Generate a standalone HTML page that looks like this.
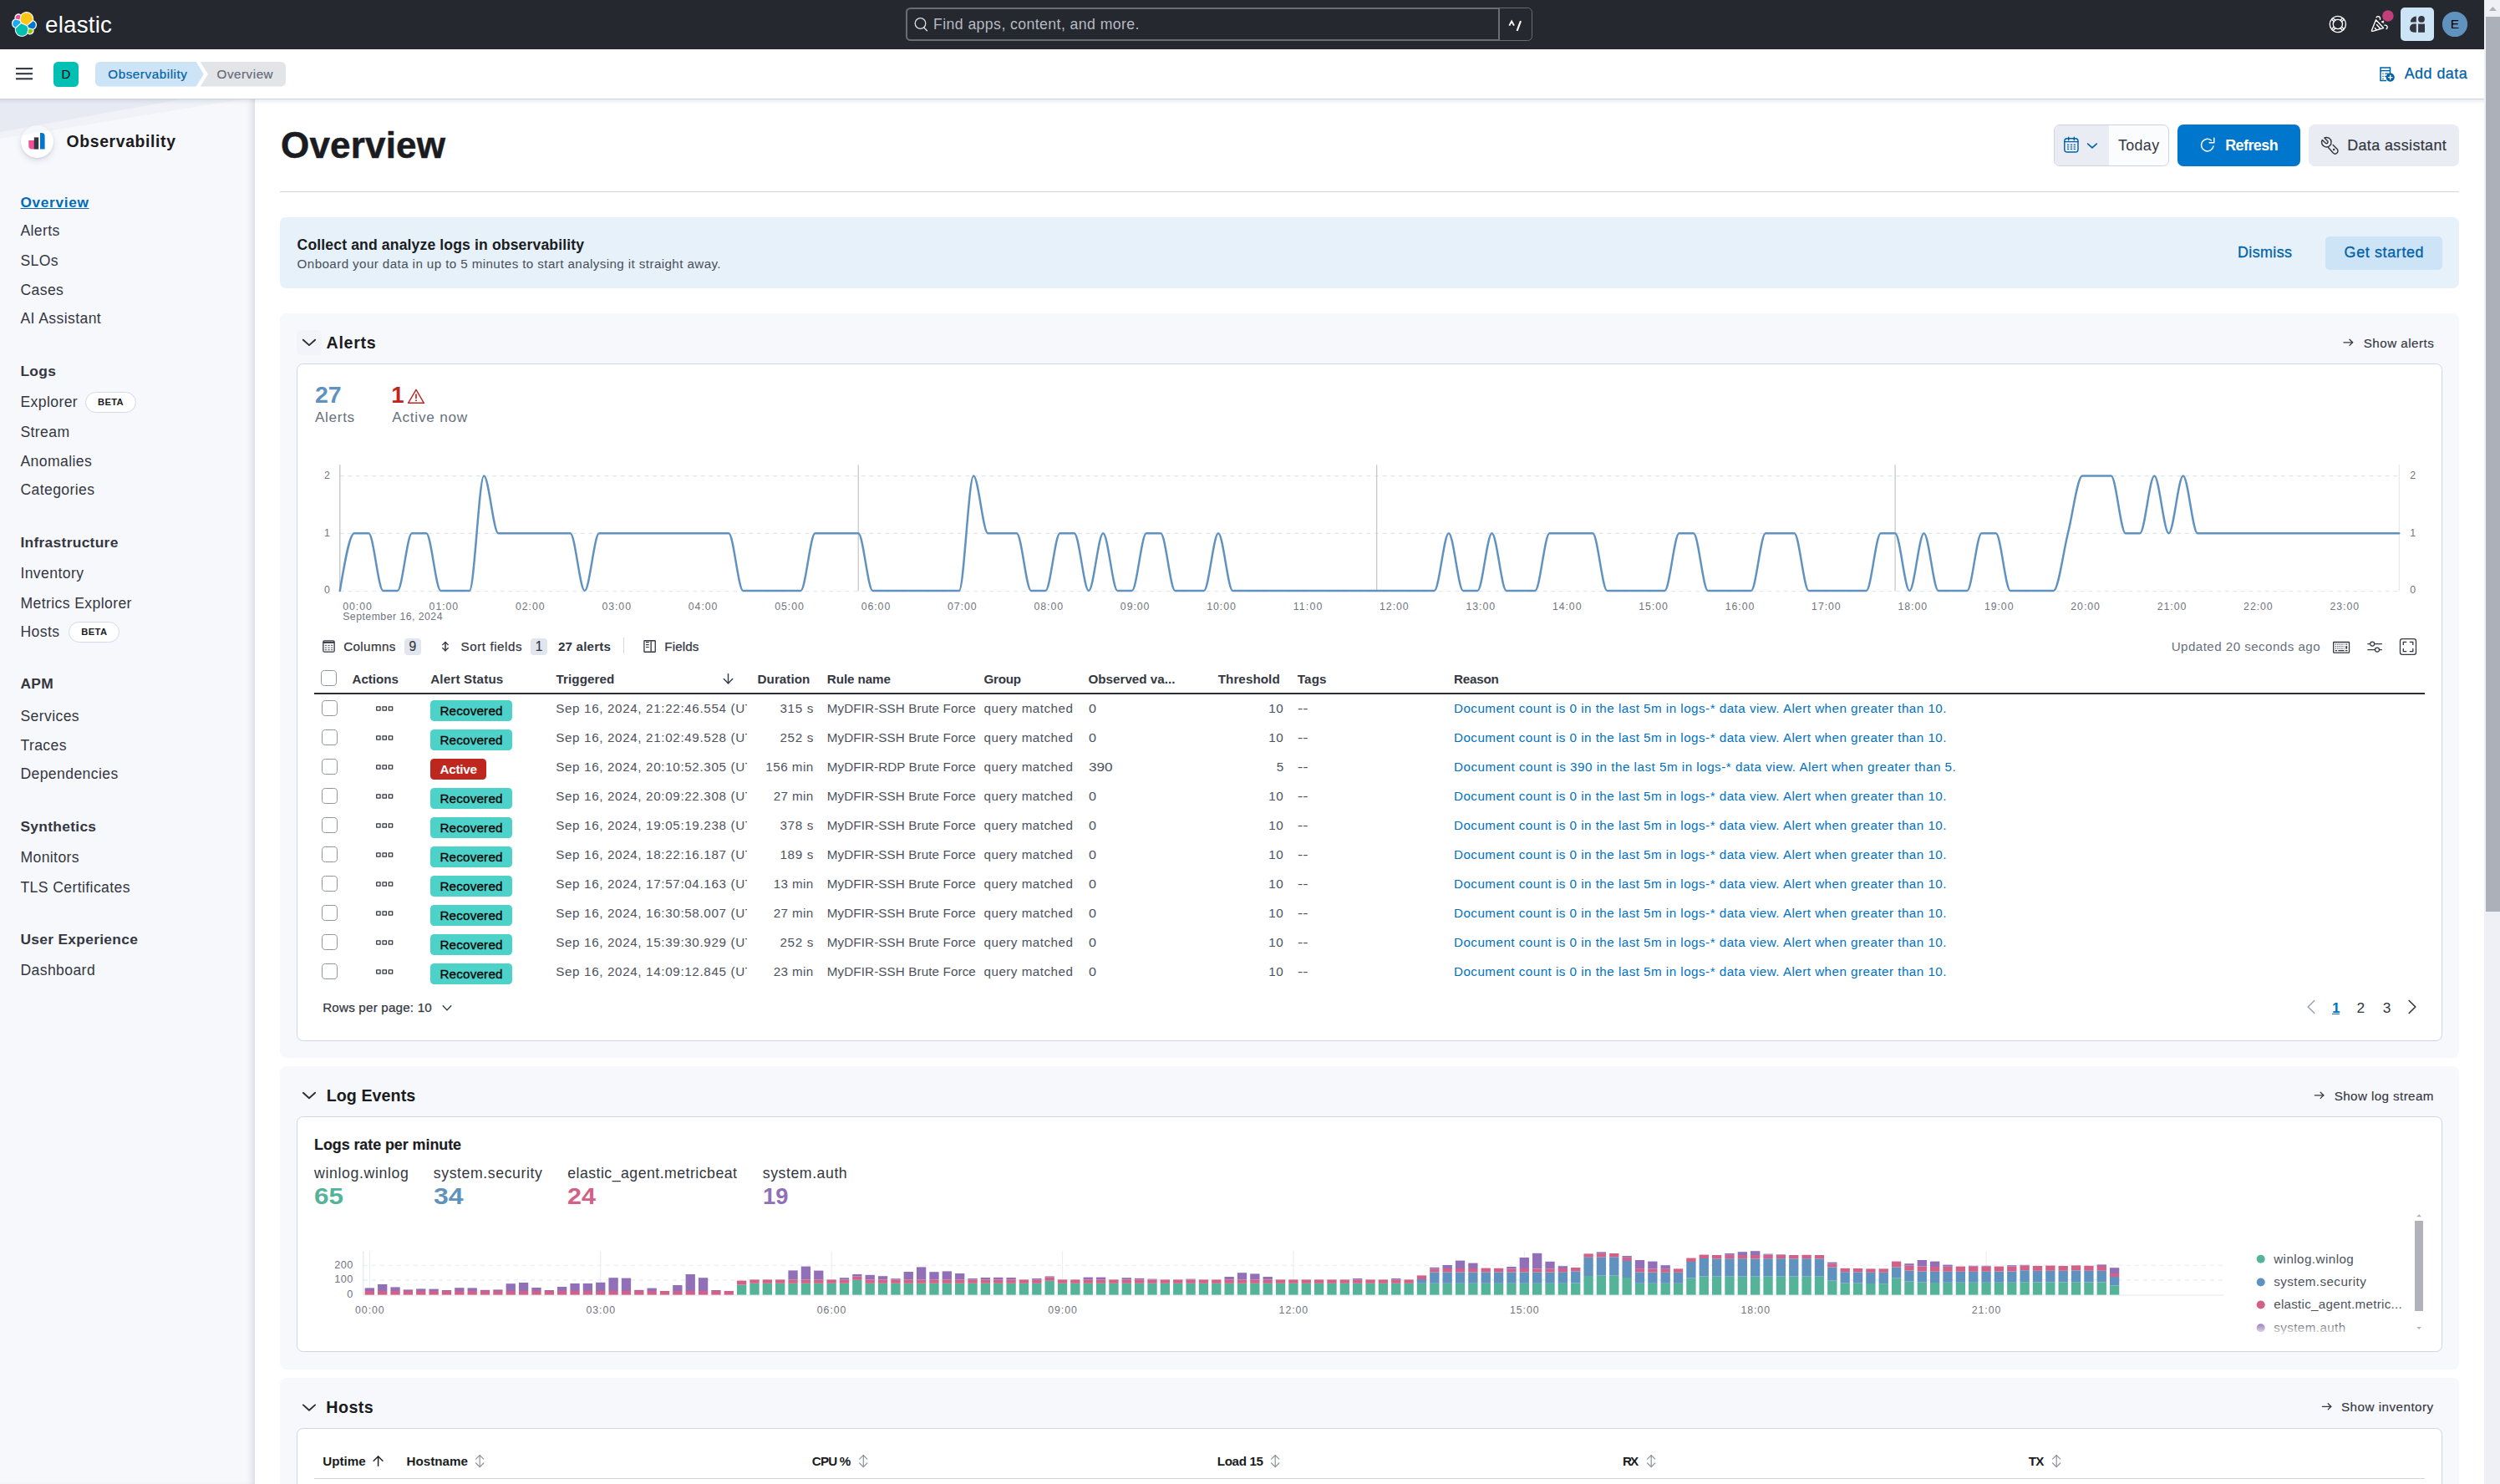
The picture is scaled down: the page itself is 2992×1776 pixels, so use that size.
<!DOCTYPE html><html><head><meta charset="utf-8"><title>Overview - Observability - Elastic</title><style>
html,body{margin:0;padding:0;}body{width:2992px;height:1776px;overflow:hidden;background:#fff;position:relative;font-family:"Liberation Sans", sans-serif;}
.b{position:absolute;}.t{position:absolute;white-space:nowrap;line-height:1;}
svg.l{position:absolute;left:0;top:0;width:2992px;height:1776px;overflow:visible;}
</style></head><body>
<div class="b" style="left:2973.0px;top:0.0px;width:19.0px;height:1776.0px;background:#eff0f5;"></div>
<div class="b" style="left:2975.0px;top:20.0px;width:17.0px;height:1071.0px;background:#acb0b9;"></div>
<div class="b" style="left:0.0px;top:0.0px;width:2973.0px;height:58.7px;background:#25282f;"></div>
<div class="b" style="left:1084.0px;top:9.0px;width:710.5px;height:40.0px;border:2px solid #6a6d75;box-sizing:border-box;border-radius:5.5px 0 0 5.5px;"></div>
<div class="b" style="left:1793.0px;top:9.0px;width:41.2px;height:40.0px;border:1.2px solid #6a6d75;box-sizing:border-box;border-radius:0 5.5px 5.5px 0;"></div>
<div class="b" style="left:2873.0px;top:9.0px;width:40.0px;height:40.0px;background:#cce4f5;border-radius:5px;"></div>
<div class="b" style="left:0.0px;top:58.7px;width:2973.0px;height:59.3px;background:#fff;"></div>
<div class="b" style="left:0.0px;top:118.0px;width:2973.0px;height:1.0px;background:#ccd2de;"></div>
<div class="b" style="left:0.0px;top:119.0px;width:2973.0px;height:6.0px;background:linear-gradient(rgba(105,120,150,0.13),rgba(105,120,150,0));z-index:3;"></div>
<div class="b" style="left:64.0px;top:74.0px;width:30.0px;height:30.0px;background:#00bfb3;border-radius:5.5px;"></div>
<div class="b" style="left:0.0px;top:119.0px;width:305.0px;height:1657.0px;background:#f7f8fc;box-shadow:inset -8px 0 8px -6px rgba(90,105,140,0.25);"></div>
<div class="b" style="left:24.5px;top:149.7px;width:39.0px;height:39.0px;background:#fff;border-radius:20px;box-shadow:0 3px 7px rgba(60,70,100,0.16),0 1px 2px rgba(60,70,100,0.10);"></div>
<div class="b" style="left:102.0px;top:469.0px;width:60.7px;height:25.0px;background:#fff;border-radius:12.5px;border:1px solid #d3dae6;box-sizing:border-box;"></div>
<div class="b" style="left:82.3px;top:744.0px;width:60.7px;height:25.0px;background:#fff;border-radius:12.5px;border:1px solid #d3dae6;box-sizing:border-box;"></div>
<div class="b" style="left:335.0px;top:229.0px;width:2608.0px;height:1.0px;background:#cfd6e3;"></div>
<div class="b" style="left:2458.3px;top:149.1px;width:137.3px;height:49.5px;background:#fbfcfd;border-radius:7px;border:1px solid #cdd3e0;box-sizing:border-box;"></div>
<div class="b" style="left:2459.3px;top:150.1px;width:64.5px;height:47.5px;background:#e9edf3;border-radius:6px 0 0 6px;"></div>
<div class="b" style="left:2606.0px;top:149.1px;width:147.0px;height:49.5px;background:#0077cc;border-radius:7px;"></div>
<div class="b" style="left:2763.0px;top:149.1px;width:180.0px;height:49.5px;background:#e9edf3;border-radius:7px;"></div>
<div class="b" style="left:335.0px;top:260.0px;width:2608.0px;height:85.0px;background:#e6f1fa;border-radius:7.5px;"></div>
<div class="b" style="left:2783.0px;top:283.0px;width:140.0px;height:40.0px;background:#cce4f5;border-radius:5px;"></div>
<div class="b" style="left:335.0px;top:375.0px;width:2608.0px;height:891.0px;background:#f7f8fc;border-radius:7.5px;"></div>
<div class="b" style="left:355.0px;top:395.0px;width:30.0px;height:30.0px;background:#f3f4f9;border-radius:5px;"></div>
<div class="b" style="left:355.0px;top:435.0px;width:2568.0px;height:811.0px;background:#fff;border-radius:7.5px;border:1px solid #ced5e3;box-sizing:border-box;"></div>
<div class="b" style="left:484.0px;top:764.1px;width:19.7px;height:19.6px;background:#e0e5ee;border-radius:4px;"></div>
<div class="b" style="left:635.2px;top:764.1px;width:19.8px;height:19.6px;background:#e0e5ee;border-radius:4px;"></div>
<div class="b" style="left:746.0px;top:763.0px;width:1.0px;height:19.0px;background:#d3dae6;"></div>
<div class="b" style="left:384.1px;top:801.9px;width:18.8px;height:18.8px;background:#fff;border-radius:4.6px;border:1.25px solid #8f949e;box-sizing:border-box;"></div>
<div class="b" style="left:375.8px;top:828.9px;width:2526.3px;height:1.8px;background:#2b2e37;"></div>
<div class="b" style="left:385.0px;top:838.4px;width:18.8px;height:18.8px;background:#fff;border-radius:4.6px;border:1.25px solid #8f949e;box-sizing:border-box;"></div>
<div class="b" style="left:515.1px;top:838.0px;width:97.8px;height:24.9px;background:#4dd2ca;border-radius:4.5px;"></div>
<div class="b" style="left:385.0px;top:873.4px;width:18.8px;height:18.8px;background:#fff;border-radius:4.6px;border:1.25px solid #8f949e;box-sizing:border-box;"></div>
<div class="b" style="left:515.1px;top:873.0px;width:97.8px;height:24.9px;background:#4dd2ca;border-radius:4.5px;"></div>
<div class="b" style="left:385.0px;top:908.4px;width:18.8px;height:18.8px;background:#fff;border-radius:4.6px;border:1.25px solid #8f949e;box-sizing:border-box;"></div>
<div class="b" style="left:515.1px;top:908.0px;width:67.0px;height:24.9px;background:#bd271e;border-radius:4.5px;"></div>
<div class="b" style="left:385.0px;top:943.4px;width:18.8px;height:18.8px;background:#fff;border-radius:4.6px;border:1.25px solid #8f949e;box-sizing:border-box;"></div>
<div class="b" style="left:515.1px;top:943.0px;width:97.8px;height:24.9px;background:#4dd2ca;border-radius:4.5px;"></div>
<div class="b" style="left:385.0px;top:978.4px;width:18.8px;height:18.8px;background:#fff;border-radius:4.6px;border:1.25px solid #8f949e;box-sizing:border-box;"></div>
<div class="b" style="left:515.1px;top:978.0px;width:97.8px;height:24.9px;background:#4dd2ca;border-radius:4.5px;"></div>
<div class="b" style="left:385.0px;top:1013.4px;width:18.8px;height:18.8px;background:#fff;border-radius:4.6px;border:1.25px solid #8f949e;box-sizing:border-box;"></div>
<div class="b" style="left:515.1px;top:1013.0px;width:97.8px;height:24.9px;background:#4dd2ca;border-radius:4.5px;"></div>
<div class="b" style="left:385.0px;top:1048.4px;width:18.8px;height:18.8px;background:#fff;border-radius:4.6px;border:1.25px solid #8f949e;box-sizing:border-box;"></div>
<div class="b" style="left:515.1px;top:1048.0px;width:97.8px;height:24.9px;background:#4dd2ca;border-radius:4.5px;"></div>
<div class="b" style="left:385.0px;top:1083.4px;width:18.8px;height:18.8px;background:#fff;border-radius:4.6px;border:1.25px solid #8f949e;box-sizing:border-box;"></div>
<div class="b" style="left:515.1px;top:1083.0px;width:97.8px;height:24.9px;background:#4dd2ca;border-radius:4.5px;"></div>
<div class="b" style="left:385.0px;top:1118.4px;width:18.8px;height:18.8px;background:#fff;border-radius:4.6px;border:1.25px solid #8f949e;box-sizing:border-box;"></div>
<div class="b" style="left:515.1px;top:1118.0px;width:97.8px;height:24.9px;background:#4dd2ca;border-radius:4.5px;"></div>
<div class="b" style="left:385.0px;top:1153.4px;width:18.8px;height:18.8px;background:#fff;border-radius:4.6px;border:1.25px solid #8f949e;box-sizing:border-box;"></div>
<div class="b" style="left:515.1px;top:1153.0px;width:97.8px;height:24.9px;background:#4dd2ca;border-radius:4.5px;"></div>
<div class="b" style="left:2791.4px;top:1212.8px;width:8.6px;height:1.3px;background:#0071c2;"></div>
<div class="b" style="left:335.0px;top:1276.0px;width:2608.0px;height:363.0px;background:#f7f8fc;border-radius:7.5px;"></div>
<div class="b" style="left:355.0px;top:1336.0px;width:2568.0px;height:282.0px;background:#fff;border-radius:7.5px;border:1px solid #ced5e3;box-sizing:border-box;"></div>
<div class="b" style="left:2695.0px;top:1582.0px;width:190.0px;height:17.0px;background:linear-gradient(rgba(255,255,255,0),rgba(255,255,255,0.95));z-index:4;"></div>
<div class="b" style="left:2890.1px;top:1460.8px;width:10.0px;height:108.2px;background:#b1b2b9;"></div>
<div class="b" style="left:335.0px;top:1649.0px;width:2608.0px;height:140.0px;background:#f7f8fc;border-radius:7.5px 7.5px 0 0;"></div>
<div class="b" style="left:355.0px;top:1709.0px;width:2568.0px;height:90.0px;background:#fff;border-radius:7.5px;border:1px solid #ced5e3;box-sizing:border-box;"></div>
<div class="b" style="left:376.0px;top:1769.0px;width:2526.0px;height:1.0px;background:#cfd6e3;"></div>
<svg class="l" viewBox="0 0 2992 1776">
<polygon points="2978.9,13 2983.4,8 2987.9,13" fill="#adb0b8"/>
<g transform="translate(14,14) scale(0.9375)"><path fill="#FFF" d="M32 16.77a6.334 6.334 0 00-1.14-3.63 6.269 6.269 0 00-3.02-2.28 8.944 8.944 0 00.16-1.7A9.127 9.127 0 0026.25 3.8a9.017 9.017 0 00-4.5-3.33A8.919 8.919 0 0016.17.43a8.98 8.98 0 00-4.58 3.2 4.896 4.896 0 00-5.56-.34 4.955 4.955 0 00-2.1 2.5 5.022 5.022 0 00-.05 3.28A6.392 6.392 0 00.03 15.2a6.33 6.33 0 001.15 3.65 6.265 6.265 0 003.04 2.28 8.73 8.73 0 00-.17 1.7 9.101 9.101 0 001.75 5.34 8.99 8.99 0 004.5 3.32 8.9 8.9 0 005.57.03 8.963 8.963 0 004.57-3.2 4.895 4.895 0 005.55.33 4.955 4.955 0 002.1-2.5 5.022 5.022 0 00.04-3.28 6.397 6.397 0 002.84-2.3A6.333 6.333 0 0032 16.77"/><path fill="#FEC514" d="M12.58 13.79l7 3.19 7.07-6.19a7.834 7.834 0 00.15-1.57 7.947 7.947 0 00-1.54-4.69 7.851 7.851 0 00-3.96-2.88 7.785 7.785 0 00-4.88.01 7.846 7.846 0 00-3.95 2.9l-1.17 6.1 1.28 3.13z"/><path fill="#00BFB3" d="M5.33 21.22a7.958 7.958 0 001.4 6.29 7.86 7.86 0 003.97 2.91 7.8 7.8 0 004.9-.02 7.855 7.855 0 003.95-2.94l1.17-6.08-1.56-2.97-7.03-3.2-6.8 6.01z"/><path fill="#F04E98" d="M5.29 9.1l4.8 1.14 1.05-5.45a3.78 3.78 0 00-4.32-.14 3.826 3.826 0 00-1.53 4.45"/><path fill="#1BA9F5" d="M4.87 10.25a5.31 5.31 0 00-2.52 1.89 5.259 5.259 0 00-.14 6.01 5.3 5.3 0 002.42 2.02l6.73-6.09-1.23-2.64-5.26-1.19z"/><path fill="#93C90E" d="M20.87 27.21a3.773 3.773 0 004.31.13 3.82 3.82 0 001.53-4.44l-4.8-1.12-1.04 5.43z"/><path fill="#07C" d="M21.85 20.63l5.28 1.24a5.337 5.337 0 002.52-1.9 5.285 5.285 0 00.98-3.03 5.28 5.28 0 00-.93-2.98 5.32 5.32 0 00-2.43-2.02l-6.9 6.05 1.48 2.64z"/></g>
<circle cx="1101.5" cy="28" r="6.3" fill="none" stroke="#dfe1e6" stroke-width="1.3"/>
<line x1="1105.80" y1="33.00" x2="1109.50" y2="36.80" stroke="#dfe1e6" stroke-width="1.3" stroke-linecap="round"/>
<path d="M1806.3 30.6 L1809.15 25.5 L1812.0 30.6" fill="none" stroke="#fff" stroke-width="1.9" stroke-linejoin="miter"/>
<path d="M1815.6 36.8 L1820.0 25.2" fill="none" stroke="#fff" stroke-width="2.1"/>
<g fill="none" stroke="#fff" stroke-width="1.35"><circle cx="2797.9" cy="29" r="9.6"/><circle cx="2797.9" cy="29" r="5.6"/><path d="M2790.4 23.0l3.2 3.2 M2792.0 21.4l3.2 3.2 M2805.4 23.0l-3.2 3.2 M2803.8 21.4l-3.2 3.2 M2790.4 35.0l3.2-3.2 M2792.0 36.6l3.2-3.2 M2805.4 35.0l-3.2-3.2 M2803.8 36.6l-3.2-3.2"/></g>
<g fill="none" stroke="#fff" stroke-width="1.4" stroke-linejoin="round" stroke-linecap="round"><path d="M2843.5 23.7 L2852.6 33.5 L2839.6 37.3 Q2838.0 37.7 2838.6 36.1 Z"/><path d="M2844.5 29.6 L2848.3 33.7 M2842.3 33.6 L2844.0 35.4"/><path d="M2844.1 20.8 A2.4 2.4 0 0 1 2848.5 21.7 V23.3"/><path d="M2852.7 25.2 L2850.5 26.1 L2852.7 27.1" stroke-width="1.2"/><path d="M2853.8 30.1 h1.4 a2.5 2.5 0 0 1 0.9 4.5"/></g>
<circle cx="2857.9" cy="19" r="6.8" fill="#c2407a"/>
<g fill="#343741"><path d="M2891.8 19.5 A6.9 6.9 0 0 0 2884.9 26.4 L2891.8 26.4 Z"/><circle cx="2898" cy="22.9" r="3.9"/><path d="M2891.8 28.6 L2889.0 28.6 A5.1 5.1 0 0 0 2889.0 38.8 L2891.8 38.8 Z"/><rect x="2894.1" y="28.6" width="7.9" height="10.2"/></g>
<circle cx="2938" cy="29" r="15.1" fill="#6092c0"/>
<line x1="19.00" y1="82.10" x2="39.00" y2="82.10" stroke="#343741" stroke-width="2.1" />
<line x1="19.00" y1="88.20" x2="39.00" y2="88.20" stroke="#343741" stroke-width="2.1" />
<line x1="19.00" y1="94.30" x2="39.00" y2="94.30" stroke="#343741" stroke-width="2.1" />
<path d="M119.5 74 H234.7 L243.8 88.7 L234.7 103.4 H119.5 A5.5 5.5 0 0 1 114 97.9 V79.5 A5.5 5.5 0 0 1 119.5 74 Z" fill="#cce4f5"/>
<path d="M239.8 74 H336.5 A5.5 5.5 0 0 1 342 79.5 V97.9 A5.5 5.5 0 0 1 336.5 103.4 H239.8 L248.9 88.7 Z" fill="#e3e4e8"/>
<g fill="none" stroke="#0061a6" stroke-width="1.5"><path d="M2860.5 88 V81 H2849 V96.4 H2856"/><path d="M2849 84.6 H2860.5" /><path d="M2851.3 88.2 h1.4 M2854.3 88.2 h4.2 M2851.3 91.3 h1.4 M2854.3 91.3 h2.4 M2851.3 94.3 h1.4" stroke-width="1.3"/></g>
<circle cx="2860.7" cy="92.6" r="5.1" fill="#0061a6"/>
<path d="M2860.7 89.8 v5.6 M2857.9 92.6 h5.6" stroke="#fff" stroke-width="1.4" fill="none"/>
<polygon points="0,119 290,119 0,166" fill="#e4e7f0" opacity="0.32"/>
<polygon points="0,119 216,119 0,158" fill="#dde1ec" opacity="0.42"/>
<path d="M34.3 168.1 H41.2 V178.6 H38.3 A4 4 0 0 1 34.3 174.6 Z" fill="#f04e98"/>
<rect x="40.8" y="164.4" width="5.4" height="14.2" fill="#343741"/>
<path d="M48 159 H49.6 A4 4 0 0 1 53.6 163 V178.6 H48 Z" fill="#0077cc"/>
<g fill="none" stroke="#0061a6" stroke-width="1.45" stroke-linejoin="round"><rect x="2470.8" y="165.8" width="16.2" height="16.2" rx="3.3"/><path d="M2470.8 169.6 H2487 M2475.7 164.3 v3.4 M2482.3 164.3 v3.4" stroke-linecap="round"/><path d="M2474 173.3 h2.2 M2477.9 173.3 h2.2 M2481.7 173.3 h2.2 M2474 175.9 h2.2 M2477.9 175.9 h2.2 M2481.7 175.9 h2.2 M2474 178.4 h2.2 M2477.9 178.4 h2.2 M2481.7 178.4 h2.2" stroke-width="1.15"/></g>
<polyline points="2498.65,172.10 2503.95,176.80 2509.25,172.10" fill="none" stroke="#0061a6" stroke-width="1.6" stroke-linecap="round" stroke-linejoin="round"/>
<g fill="none" stroke="#fff" stroke-width="1.5" stroke-linecap="round" stroke-linejoin="round"><path d="M2649.0 174.9 A7.3 7.3 0 1 1 2646.3 167.9"/><path d="M2649.8 165.2 v5.6 h-5.6"/></g>
<g fill="none" stroke="#343741" stroke-width="1.45" stroke-linejoin="round" stroke-linecap="round"><path d="M2781.9 165.0 L2785.8 168.9 A1.75 1.75 0 0 1 2783.5 171.4 L2779.3 167.4 A5.75 5.75 0 1 0 2781.9 165.0"/><path d="M2786.5 176.4 L2792.3 183.0 A3.3 3.3 0 0 0 2797.0 178.3 L2792.2 173.4"/><circle cx="2793.2" cy="179.0" r="0.55" fill="#343741"/></g>
<polyline points="362.85,406.70 370.00,413.10 377.15,406.70" fill="none" stroke="#2a2d36" stroke-width="1.9" stroke-linecap="round" stroke-linejoin="round"/>
<line x1="2805.00" y1="409.80" x2="2815.60" y2="409.80" stroke="#343741" stroke-width="1.3" stroke-linecap="round"/>
<polyline points="2812.00,406.20 2815.60,409.80 2812.00,413.40" fill="none" stroke="#343741" stroke-width="1.3" stroke-linecap="round" stroke-linejoin="round"/>
<g fill="none" stroke="#bd271e" stroke-width="1.4" stroke-linejoin="round"><path d="M498 466.3 L507.4 482.3 H488.6 Z"/></g>
<path d="M498 471.5 v5.4" stroke="#bd271e" stroke-width="1.7" fill="none"/><circle cx="498" cy="479.3" r="1" fill="#bd271e"/>
<line x1="406.80" y1="569.60" x2="2871.30" y2="569.60" stroke="#e1e5ef" stroke-width="1.2" stroke-dasharray="4.8 4.8"/>
<line x1="406.80" y1="638.30" x2="2871.30" y2="638.30" stroke="#e1e5ef" stroke-width="1.2" stroke-dasharray="4.8 4.8"/>
<line x1="406.80" y1="707.60" x2="2871.30" y2="707.60" stroke="#e4e8f1" stroke-width="1.2" stroke-dasharray="4.8 4.8"/>
<line x1="406.80" y1="556.20" x2="406.80" y2="707.40" stroke="#bcbdc2" stroke-width="1.2" />
<line x1="1027.23" y1="556.20" x2="1027.23" y2="707.40" stroke="#c3c4c8" stroke-width="1.2" />
<line x1="1647.67" y1="556.20" x2="1647.67" y2="707.40" stroke="#c3c4c8" stroke-width="1.2" />
<line x1="2268.10" y1="556.20" x2="2268.10" y2="707.40" stroke="#c3c4c8" stroke-width="1.2" />
<line x1="2871.30" y1="556.20" x2="2871.30" y2="707.40" stroke="#e6e8ee" stroke-width="1.2" />
<path d="M406.80,707.00C412.54,672.65 418.29,638.30 424.03,638.30C429.78,638.30 435.52,638.30 441.27,638.30C447.01,638.30 452.76,707.00 458.50,707.00C464.25,707.00 469.99,707.00 475.74,707.00C481.48,707.00 487.23,638.30 492.97,638.30C498.72,638.30 504.46,638.30 510.21,638.30C515.95,638.30 521.70,707.00 527.44,707.00C533.18,707.00 538.93,707.00 544.67,707.00C550.42,707.00 556.16,707.00 561.91,707.00C567.65,707.00 573.40,569.60 579.14,569.60C584.89,569.60 590.63,638.30 596.38,638.30C602.12,638.30 607.87,638.30 613.61,638.30C619.36,638.30 625.10,638.30 630.85,638.30C636.59,638.30 642.33,638.30 648.08,638.30C653.82,638.30 659.57,638.30 665.31,638.30C671.06,638.30 676.80,638.30 682.55,638.30C688.29,638.30 694.04,707.00 699.78,707.00C705.53,707.00 711.27,638.30 717.02,638.30C722.76,638.30 728.51,638.30 734.25,638.30C740.00,638.30 745.74,638.30 751.49,638.30C757.23,638.30 762.97,638.30 768.72,638.30C774.46,638.30 780.21,638.30 785.95,638.30C791.70,638.30 797.44,638.30 803.19,638.30C808.93,638.30 814.68,638.30 820.42,638.30C826.17,638.30 831.91,638.30 837.66,638.30C843.40,638.30 849.15,638.30 854.89,638.30C860.64,638.30 866.38,638.30 872.13,638.30C877.87,638.30 883.61,707.00 889.36,707.00C895.10,707.00 900.85,707.00 906.59,707.00C912.34,707.00 918.08,707.00 923.83,707.00C929.57,707.00 935.32,707.00 941.06,707.00C946.81,707.00 952.55,707.00 958.30,707.00C964.04,707.00 969.79,638.30 975.53,638.30C981.28,638.30 987.02,638.30 992.77,638.30C998.51,638.30 1004.25,638.30 1010.00,638.30C1015.74,638.30 1021.49,638.30 1027.23,638.30C1032.98,638.30 1038.72,707.00 1044.47,707.00C1050.21,707.00 1055.96,707.00 1061.70,707.00C1067.45,707.00 1073.19,707.00 1078.94,707.00C1084.68,707.00 1090.43,707.00 1096.17,707.00C1101.92,707.00 1107.66,707.00 1113.40,707.00C1119.15,707.00 1124.89,707.00 1130.64,707.00C1136.38,707.00 1142.13,707.00 1147.87,707.00C1153.62,707.00 1159.36,569.60 1165.11,569.60C1170.85,569.60 1176.60,638.30 1182.34,638.30C1188.09,638.30 1193.83,638.30 1199.58,638.30C1205.32,638.30 1211.07,638.30 1216.81,638.30C1222.56,638.30 1228.30,707.00 1234.04,707.00C1239.79,707.00 1245.53,707.00 1251.28,707.00C1257.02,707.00 1262.77,638.30 1268.51,638.30C1274.26,638.30 1280.00,638.30 1285.75,638.30C1291.49,638.30 1297.24,707.00 1302.98,707.00C1308.73,707.00 1314.47,638.30 1320.22,638.30C1325.96,638.30 1331.71,707.00 1337.45,707.00C1343.20,707.00 1348.94,707.00 1354.68,707.00C1360.43,707.00 1366.17,638.30 1371.92,638.30C1377.66,638.30 1383.41,638.30 1389.15,638.30C1394.90,638.30 1400.64,707.00 1406.39,707.00C1412.13,707.00 1417.88,707.00 1423.62,707.00C1429.37,707.00 1435.11,707.00 1440.86,707.00C1446.60,707.00 1452.35,638.30 1458.09,638.30C1463.83,638.30 1469.58,707.00 1475.32,707.00C1481.07,707.00 1486.81,707.00 1492.56,707.00C1498.30,707.00 1504.05,707.00 1509.79,707.00C1515.54,707.00 1521.28,707.00 1527.03,707.00C1532.77,707.00 1538.52,707.00 1544.26,707.00C1550.01,707.00 1555.75,707.00 1561.50,707.00C1567.24,707.00 1572.99,707.00 1578.73,707.00C1584.47,707.00 1590.22,707.00 1595.96,707.00C1601.71,707.00 1607.45,707.00 1613.20,707.00C1618.94,707.00 1624.69,707.00 1630.43,707.00C1636.18,707.00 1641.92,707.00 1647.67,707.00C1653.41,707.00 1659.16,707.00 1664.90,707.00C1670.65,707.00 1676.39,707.00 1682.14,707.00C1687.88,707.00 1693.63,707.00 1699.37,707.00C1705.11,707.00 1710.86,707.00 1716.60,707.00C1722.35,707.00 1728.09,638.30 1733.84,638.30C1739.58,638.30 1745.33,707.00 1751.07,707.00C1756.82,707.00 1762.56,707.00 1768.31,707.00C1774.05,707.00 1779.80,638.30 1785.54,638.30C1791.29,638.30 1797.03,707.00 1802.78,707.00C1808.52,707.00 1814.27,707.00 1820.01,707.00C1825.75,707.00 1831.50,707.00 1837.24,707.00C1842.99,707.00 1848.73,638.30 1854.48,638.30C1860.22,638.30 1865.97,638.30 1871.71,638.30C1877.46,638.30 1883.20,638.30 1888.95,638.30C1894.69,638.30 1900.44,638.30 1906.18,638.30C1911.93,638.30 1917.67,707.00 1923.42,707.00C1929.16,707.00 1934.90,707.00 1940.65,707.00C1946.39,707.00 1952.14,707.00 1957.88,707.00C1963.63,707.00 1969.37,707.00 1975.12,707.00C1980.86,707.00 1986.61,707.00 1992.35,707.00C1998.10,707.00 2003.84,638.30 2009.59,638.30C2015.33,638.30 2021.08,638.30 2026.82,638.30C2032.57,638.30 2038.31,707.00 2044.06,707.00C2049.80,707.00 2055.54,707.00 2061.29,707.00C2067.03,707.00 2072.78,707.00 2078.52,707.00C2084.27,707.00 2090.01,707.00 2095.76,707.00C2101.50,707.00 2107.25,638.30 2112.99,638.30C2118.74,638.30 2124.48,638.30 2130.23,638.30C2135.97,638.30 2141.72,638.30 2147.46,638.30C2153.21,638.30 2158.95,707.00 2164.70,707.00C2170.44,707.00 2176.18,707.00 2181.93,707.00C2187.67,707.00 2193.42,707.00 2199.16,707.00C2204.91,707.00 2210.65,707.00 2216.40,707.00C2222.14,707.00 2227.89,707.00 2233.63,707.00C2239.38,707.00 2245.12,638.30 2250.87,638.30C2256.61,638.30 2262.36,638.30 2268.10,638.30C2273.85,638.30 2279.59,707.00 2285.33,707.00C2291.08,707.00 2296.82,638.30 2302.57,638.30C2308.31,638.30 2314.06,707.00 2319.80,707.00C2325.55,707.00 2331.29,707.00 2337.04,707.00C2342.78,707.00 2348.53,707.00 2354.27,707.00C2360.02,707.00 2365.76,638.30 2371.51,638.30C2377.25,638.30 2383.00,638.30 2388.74,638.30C2394.49,638.30 2400.23,707.00 2405.97,707.00C2411.72,707.00 2417.46,707.00 2423.21,707.00C2428.95,707.00 2434.70,707.00 2440.44,707.00C2446.19,707.00 2451.93,707.00 2457.68,707.00C2463.42,707.00 2469.17,661.20 2474.91,638.30C2480.66,615.40 2486.40,569.60 2492.15,569.60C2497.89,569.60 2503.64,569.60 2509.38,569.60C2515.13,569.60 2520.87,569.60 2526.61,569.60C2532.36,569.60 2538.10,638.30 2543.85,638.30C2549.59,638.30 2555.34,638.30 2561.08,638.30C2566.83,638.30 2572.57,569.60 2578.32,569.60C2584.06,569.60 2589.81,638.30 2595.55,638.30C2601.30,638.30 2607.04,569.60 2612.79,569.60C2618.53,569.60 2624.28,638.30 2630.02,638.30C2635.77,638.30 2641.51,638.30 2647.25,638.30C2653.00,638.30 2658.74,638.30 2664.49,638.30C2670.23,638.30 2675.98,638.30 2681.72,638.30C2687.47,638.30 2693.21,638.30 2698.96,638.30C2704.70,638.30 2710.45,638.30 2716.19,638.30C2721.94,638.30 2727.68,638.30 2733.43,638.30C2739.17,638.30 2744.92,638.30 2750.66,638.30C2756.40,638.30 2762.15,638.30 2767.89,638.30C2773.64,638.30 2779.38,638.30 2785.13,638.30C2790.87,638.30 2796.62,638.30 2802.36,638.30C2808.11,638.30 2813.85,638.30 2819.60,638.30C2825.34,638.30 2831.09,638.30 2836.83,638.30C2842.58,638.30 2848.32,638.30 2854.07,638.30C2859.81,638.30 2865.56,638.30 2871.30,638.30" fill="none" stroke="#6092c0" stroke-width="2.5" stroke-linejoin="round" stroke-linecap="round"/>
<g fill="none" stroke="#343741" stroke-width="1.3"><rect x="386.85" y="766.85" width="13.3" height="13.3" rx="1.5"/><path d="M386.9 768.9 H400.1" stroke-width="1.9"/><path d="M388.7 772.3 h2.4 M392.3 772.3 h2.4 M395.9 772.3 h2.4 M388.7 775.0 h2.4 M392.3 775.0 h2.4 M395.9 775.0 h2.4 M388.7 777.6 h2.4 M392.3 777.6 h2.4 M395.9 777.6 h2.4" stroke="#70747e" stroke-width="1.25"/></g>
<line x1="533.00" y1="769.00" x2="533.00" y2="778.00" stroke="#8a8e98" stroke-width="1.3" />
<line x1="533.00" y1="768.40" x2="533.00" y2="778.80" stroke="#343741" stroke-width="1.25" stroke-linecap="round"/>
<polyline points="529.70,771.70 533.00,768.40 536.30,771.70" fill="none" stroke="#343741" stroke-width="1.25" stroke-linecap="round" stroke-linejoin="round"/>
<polyline points="529.70,775.50 533.00,778.80 536.30,775.50" fill="none" stroke="#343741" stroke-width="1.25" stroke-linecap="round" stroke-linejoin="round"/>
<g fill="none" stroke="#343741" stroke-width="1.3"><rect x="770.95" y="766.75" width="13.3" height="13.5" rx="0.6"/><path d="M779.2 766.8 V780.2" stroke="#5a5e69" stroke-width="1.7"/><path d="M773 768.7 h3.7 M773 771.6 h3.7 M773 774.5 h3.7" stroke-width="1.2"/></g>
<g fill="none" stroke="#343741" stroke-width="1.3"><rect x="2792.65" y="768.5" width="18.9" height="12.6" rx="0.5"/><path d="M2794.7 771.1 h11 M2794.7 773.6 h11 M2794.7 776.1 h11" stroke="#5d616c" stroke-dasharray="1.4 1.1" stroke-width="1.3"/><path d="M2794.7 778.6 h2.4 M2798.4 778.6 h7.2 M2807.0 778.6 h2.4" stroke-width="1.3"/><path d="M2808.2 773.2 v3.4" stroke-width="1.9"/><path d="M2807.2 771.1 h2" stroke="#5d616c" stroke-width="1.3"/></g>
<g fill="none" stroke="#343741" stroke-width="1.25" stroke-linecap="round"><path d="M2833.8 770.6 h2.6 M2842.2 770.6 h8.2 M2833.8 777.6 h8.2 M2847.8 777.6 h2.6"/><circle cx="2839.2" cy="770.6" r="2.5"/><circle cx="2845" cy="777.6" r="2.5"/></g>
<g fill="none" stroke="#343741" stroke-width="1.3"><rect x="2872.5" y="764.6" width="19" height="18.8" rx="2.6"/><path d="M2876.3 772 v-3.6 h4 M2883.8 768.4 h4 v3.6 M2887.8 776 v3.6 h-4 M2880.3 779.6 h-4 v-3.6"/></g>
<line x1="871.50" y1="806.60" x2="871.50" y2="817.80" stroke="#343741" stroke-width="1.4" stroke-linecap="round"/>
<polyline points="866.30,812.60 871.50,817.80 876.70,812.60" fill="none" stroke="#343741" stroke-width="1.4" stroke-linecap="round" stroke-linejoin="round"/>
<rect x="450.70" y="845.80" width="4.4" height="4.4" rx="0.2" fill="none" stroke="#343741" stroke-width="1.25"/>
<rect x="458.00" y="845.80" width="4.4" height="4.4" rx="0.2" fill="none" stroke="#343741" stroke-width="1.25"/>
<rect x="465.30" y="845.80" width="4.4" height="4.4" rx="0.2" fill="none" stroke="#343741" stroke-width="1.25"/>
<rect x="450.70" y="880.80" width="4.4" height="4.4" rx="0.2" fill="none" stroke="#343741" stroke-width="1.25"/>
<rect x="458.00" y="880.80" width="4.4" height="4.4" rx="0.2" fill="none" stroke="#343741" stroke-width="1.25"/>
<rect x="465.30" y="880.80" width="4.4" height="4.4" rx="0.2" fill="none" stroke="#343741" stroke-width="1.25"/>
<rect x="450.70" y="915.80" width="4.4" height="4.4" rx="0.2" fill="none" stroke="#343741" stroke-width="1.25"/>
<rect x="458.00" y="915.80" width="4.4" height="4.4" rx="0.2" fill="none" stroke="#343741" stroke-width="1.25"/>
<rect x="465.30" y="915.80" width="4.4" height="4.4" rx="0.2" fill="none" stroke="#343741" stroke-width="1.25"/>
<rect x="450.70" y="950.80" width="4.4" height="4.4" rx="0.2" fill="none" stroke="#343741" stroke-width="1.25"/>
<rect x="458.00" y="950.80" width="4.4" height="4.4" rx="0.2" fill="none" stroke="#343741" stroke-width="1.25"/>
<rect x="465.30" y="950.80" width="4.4" height="4.4" rx="0.2" fill="none" stroke="#343741" stroke-width="1.25"/>
<rect x="450.70" y="985.80" width="4.4" height="4.4" rx="0.2" fill="none" stroke="#343741" stroke-width="1.25"/>
<rect x="458.00" y="985.80" width="4.4" height="4.4" rx="0.2" fill="none" stroke="#343741" stroke-width="1.25"/>
<rect x="465.30" y="985.80" width="4.4" height="4.4" rx="0.2" fill="none" stroke="#343741" stroke-width="1.25"/>
<rect x="450.70" y="1020.80" width="4.4" height="4.4" rx="0.2" fill="none" stroke="#343741" stroke-width="1.25"/>
<rect x="458.00" y="1020.80" width="4.4" height="4.4" rx="0.2" fill="none" stroke="#343741" stroke-width="1.25"/>
<rect x="465.30" y="1020.80" width="4.4" height="4.4" rx="0.2" fill="none" stroke="#343741" stroke-width="1.25"/>
<rect x="450.70" y="1055.80" width="4.4" height="4.4" rx="0.2" fill="none" stroke="#343741" stroke-width="1.25"/>
<rect x="458.00" y="1055.80" width="4.4" height="4.4" rx="0.2" fill="none" stroke="#343741" stroke-width="1.25"/>
<rect x="465.30" y="1055.80" width="4.4" height="4.4" rx="0.2" fill="none" stroke="#343741" stroke-width="1.25"/>
<rect x="450.70" y="1090.80" width="4.4" height="4.4" rx="0.2" fill="none" stroke="#343741" stroke-width="1.25"/>
<rect x="458.00" y="1090.80" width="4.4" height="4.4" rx="0.2" fill="none" stroke="#343741" stroke-width="1.25"/>
<rect x="465.30" y="1090.80" width="4.4" height="4.4" rx="0.2" fill="none" stroke="#343741" stroke-width="1.25"/>
<rect x="450.70" y="1125.80" width="4.4" height="4.4" rx="0.2" fill="none" stroke="#343741" stroke-width="1.25"/>
<rect x="458.00" y="1125.80" width="4.4" height="4.4" rx="0.2" fill="none" stroke="#343741" stroke-width="1.25"/>
<rect x="465.30" y="1125.80" width="4.4" height="4.4" rx="0.2" fill="none" stroke="#343741" stroke-width="1.25"/>
<rect x="450.70" y="1160.80" width="4.4" height="4.4" rx="0.2" fill="none" stroke="#343741" stroke-width="1.25"/>
<rect x="458.00" y="1160.80" width="4.4" height="4.4" rx="0.2" fill="none" stroke="#343741" stroke-width="1.25"/>
<rect x="465.30" y="1160.80" width="4.4" height="4.4" rx="0.2" fill="none" stroke="#343741" stroke-width="1.25"/>
<polyline points="530.20,1203.70 535.00,1208.90 539.80,1203.70" fill="none" stroke="#343741" stroke-width="1.4" stroke-linecap="round" stroke-linejoin="round"/>
<polyline points="2769.80,1197.50 2762.20,1205.00 2769.80,1212.50" fill="none" stroke="#98a2b3" stroke-width="1.5" stroke-linecap="round" stroke-linejoin="round"/>
<polyline points="2883.20,1197.50 2890.80,1205.00 2883.20,1212.50" fill="none" stroke="#343741" stroke-width="1.7" stroke-linecap="round" stroke-linejoin="round"/>
<polyline points="362.85,1307.80 370.00,1314.20 377.15,1307.80" fill="none" stroke="#2a2d36" stroke-width="1.9" stroke-linecap="round" stroke-linejoin="round"/>
<line x1="2770.30" y1="1310.80" x2="2780.80" y2="1310.80" stroke="#343741" stroke-width="1.3" stroke-linecap="round"/>
<polyline points="2777.20,1307.20 2780.80,1310.80 2777.20,1314.40" fill="none" stroke="#343741" stroke-width="1.3" stroke-linecap="round" stroke-linejoin="round"/>
<line x1="434.80" y1="1514.20" x2="2661.30" y2="1514.20" stroke="#e7eaf1" stroke-width="1.1" stroke-dasharray="5 5"/>
<line x1="434.80" y1="1531.90" x2="2661.30" y2="1531.90" stroke="#e7eaf1" stroke-width="1.1" stroke-dasharray="5 5"/>
<line x1="434.80" y1="1550.00" x2="2661.30" y2="1550.00" stroke="#e3e6ee" stroke-width="1.2" />
<line x1="434.80" y1="1497.00" x2="434.80" y2="1550.00" stroke="#e3e6ee" stroke-width="1.2" />
<line x1="442.35" y1="1497.00" x2="442.35" y2="1550.00" stroke="#eceef4" stroke-width="1.2" />
<line x1="718.74" y1="1497.00" x2="718.74" y2="1550.00" stroke="#eceef4" stroke-width="1.2" />
<line x1="995.13" y1="1497.00" x2="995.13" y2="1550.00" stroke="#eceef4" stroke-width="1.2" />
<line x1="1271.52" y1="1497.00" x2="1271.52" y2="1550.00" stroke="#eceef4" stroke-width="1.2" />
<line x1="1547.91" y1="1497.00" x2="1547.91" y2="1550.00" stroke="#eceef4" stroke-width="1.2" />
<line x1="1824.30" y1="1497.00" x2="1824.30" y2="1550.00" stroke="#eceef4" stroke-width="1.2" />
<line x1="2100.69" y1="1497.00" x2="2100.69" y2="1550.00" stroke="#eceef4" stroke-width="1.2" />
<line x1="2377.08" y1="1497.00" x2="2377.08" y2="1550.00" stroke="#eceef4" stroke-width="1.2" />
<rect x="436.70" y="1545.00" width="11.30" height="4.60" fill="#d36086" rx="0" />
<rect x="436.70" y="1541.40" width="11.30" height="3.60" fill="#9170b8" rx="0" />
<rect x="452.06" y="1545.00" width="11.30" height="4.60" fill="#d36086" rx="0" />
<rect x="452.06" y="1537.00" width="11.30" height="8.00" fill="#9170b8" rx="0" />
<rect x="467.41" y="1545.00" width="11.30" height="4.60" fill="#d36086" rx="0" />
<rect x="467.41" y="1540.40" width="11.30" height="4.60" fill="#9170b8" rx="0" />
<rect x="482.76" y="1545.00" width="11.30" height="4.60" fill="#d36086" rx="0" />
<rect x="482.76" y="1543.40" width="11.30" height="1.60" fill="#9170b8" rx="0" />
<rect x="498.12" y="1545.00" width="11.30" height="4.60" fill="#d36086" rx="0" />
<rect x="498.12" y="1542.40" width="11.30" height="2.60" fill="#9170b8" rx="0" />
<rect x="513.48" y="1545.00" width="11.30" height="4.60" fill="#d36086" rx="0" />
<rect x="513.48" y="1542.60" width="11.30" height="2.40" fill="#9170b8" rx="0" />
<rect x="528.83" y="1545.00" width="11.30" height="4.60" fill="#d36086" rx="0" />
<rect x="528.83" y="1544.00" width="11.30" height="1.00" fill="#9170b8" rx="0" />
<rect x="544.18" y="1545.00" width="11.30" height="4.60" fill="#d36086" rx="0" />
<rect x="544.18" y="1541.20" width="11.30" height="3.80" fill="#9170b8" rx="0" />
<rect x="559.54" y="1545.00" width="11.30" height="4.60" fill="#d36086" rx="0" />
<rect x="559.54" y="1541.40" width="11.30" height="3.60" fill="#9170b8" rx="0" />
<rect x="574.89" y="1545.00" width="11.30" height="4.60" fill="#d36086" rx="0" />
<rect x="574.89" y="1543.80" width="11.30" height="1.20" fill="#9170b8" rx="0" />
<rect x="590.25" y="1545.00" width="11.30" height="4.60" fill="#d36086" rx="0" />
<rect x="590.25" y="1543.40" width="11.30" height="1.60" fill="#9170b8" rx="0" />
<rect x="605.61" y="1545.00" width="11.30" height="4.60" fill="#d36086" rx="0" />
<rect x="605.61" y="1536.20" width="11.30" height="8.80" fill="#9170b8" rx="0" />
<rect x="620.96" y="1545.00" width="11.30" height="4.60" fill="#d36086" rx="0" />
<rect x="620.96" y="1535.00" width="11.30" height="10.00" fill="#9170b8" rx="0" />
<rect x="636.32" y="1545.00" width="11.30" height="4.60" fill="#d36086" rx="0" />
<rect x="636.32" y="1541.00" width="11.30" height="4.00" fill="#9170b8" rx="0" />
<rect x="651.67" y="1545.00" width="11.30" height="4.60" fill="#d36086" rx="0" />
<rect x="651.67" y="1544.00" width="11.30" height="1.00" fill="#9170b8" rx="0" />
<rect x="667.02" y="1545.00" width="11.30" height="4.60" fill="#d36086" rx="0" />
<rect x="667.02" y="1540.00" width="11.30" height="5.00" fill="#9170b8" rx="0" />
<rect x="682.38" y="1545.00" width="11.30" height="4.60" fill="#d36086" rx="0" />
<rect x="682.38" y="1536.00" width="11.30" height="9.00" fill="#9170b8" rx="0" />
<rect x="697.74" y="1545.00" width="11.30" height="4.60" fill="#d36086" rx="0" />
<rect x="697.74" y="1536.00" width="11.30" height="9.00" fill="#9170b8" rx="0" />
<rect x="713.09" y="1545.00" width="11.30" height="4.60" fill="#d36086" rx="0" />
<rect x="713.09" y="1534.80" width="11.30" height="10.20" fill="#9170b8" rx="0" />
<rect x="728.44" y="1545.00" width="11.30" height="4.60" fill="#d36086" rx="0" />
<rect x="728.44" y="1529.20" width="11.30" height="15.80" fill="#9170b8" rx="0" />
<rect x="743.80" y="1545.00" width="11.30" height="4.60" fill="#d36086" rx="0" />
<rect x="743.80" y="1529.60" width="11.30" height="15.40" fill="#9170b8" rx="0" />
<rect x="759.15" y="1545.00" width="11.30" height="4.60" fill="#d36086" rx="0" />
<rect x="759.15" y="1543.80" width="11.30" height="1.20" fill="#9170b8" rx="0" />
<rect x="774.51" y="1545.00" width="11.30" height="4.60" fill="#d36086" rx="0" />
<rect x="774.51" y="1541.60" width="11.30" height="3.40" fill="#9170b8" rx="0" />
<rect x="789.87" y="1545.00" width="11.30" height="4.60" fill="#d36086" rx="0" />
<rect x="805.22" y="1545.00" width="11.30" height="4.60" fill="#d36086" rx="0" />
<rect x="805.22" y="1538.00" width="11.30" height="7.00" fill="#9170b8" rx="0" />
<rect x="820.58" y="1545.00" width="11.30" height="4.60" fill="#d36086" rx="0" />
<rect x="820.58" y="1525.00" width="11.30" height="20.00" fill="#9170b8" rx="0" />
<rect x="835.93" y="1545.00" width="11.30" height="4.60" fill="#d36086" rx="0" />
<rect x="835.93" y="1529.20" width="11.30" height="15.80" fill="#9170b8" rx="0" />
<rect x="851.29" y="1545.00" width="11.30" height="4.60" fill="#d36086" rx="0" />
<rect x="851.29" y="1544.00" width="11.30" height="1.00" fill="#9170b8" rx="0" />
<rect x="866.64" y="1545.00" width="11.30" height="4.60" fill="#d36086" rx="0" />
<rect x="882.00" y="1537.60" width="11.30" height="12.00" fill="#54b399" rx="0" />
<rect x="882.00" y="1532.60" width="11.30" height="5.00" fill="#d36086" rx="0" />
<rect x="897.35" y="1535.80" width="11.30" height="13.80" fill="#54b399" rx="0" />
<rect x="897.35" y="1531.40" width="11.30" height="4.40" fill="#d36086" rx="0" />
<rect x="912.70" y="1535.80" width="11.30" height="13.80" fill="#54b399" rx="0" />
<rect x="912.70" y="1531.40" width="11.30" height="4.40" fill="#d36086" rx="0" />
<rect x="928.06" y="1535.80" width="11.30" height="13.80" fill="#54b399" rx="0" />
<rect x="928.06" y="1531.40" width="11.30" height="4.40" fill="#d36086" rx="0" />
<rect x="943.41" y="1535.80" width="11.30" height="13.80" fill="#54b399" rx="0" />
<rect x="943.41" y="1531.40" width="11.30" height="4.40" fill="#d36086" rx="0" />
<rect x="943.41" y="1520.40" width="11.30" height="11.00" fill="#9170b8" rx="0" />
<rect x="958.77" y="1535.80" width="11.30" height="13.80" fill="#54b399" rx="0" />
<rect x="958.77" y="1531.40" width="11.30" height="4.40" fill="#d36086" rx="0" />
<rect x="958.77" y="1515.60" width="11.30" height="15.80" fill="#9170b8" rx="0" />
<rect x="974.12" y="1535.80" width="11.30" height="13.80" fill="#54b399" rx="0" />
<rect x="974.12" y="1531.40" width="11.30" height="4.40" fill="#d36086" rx="0" />
<rect x="974.12" y="1520.60" width="11.30" height="10.80" fill="#9170b8" rx="0" />
<rect x="989.48" y="1535.80" width="11.30" height="13.80" fill="#54b399" rx="0" />
<rect x="989.48" y="1531.40" width="11.30" height="4.40" fill="#d36086" rx="0" />
<rect x="1004.84" y="1535.80" width="11.30" height="13.80" fill="#54b399" rx="0" />
<rect x="1004.84" y="1531.40" width="11.30" height="4.40" fill="#d36086" rx="0" />
<rect x="1004.84" y="1529.20" width="11.30" height="2.20" fill="#9170b8" rx="0" />
<rect x="1020.19" y="1531.80" width="11.30" height="17.80" fill="#54b399" rx="0" />
<rect x="1020.19" y="1527.60" width="11.30" height="4.20" fill="#d36086" rx="0" />
<rect x="1020.19" y="1525.00" width="11.30" height="2.60" fill="#9170b8" rx="0" />
<rect x="1035.55" y="1535.80" width="11.30" height="13.80" fill="#54b399" rx="0" />
<rect x="1035.55" y="1531.40" width="11.30" height="4.40" fill="#d36086" rx="0" />
<rect x="1035.55" y="1525.80" width="11.30" height="5.60" fill="#9170b8" rx="0" />
<rect x="1050.90" y="1535.80" width="11.30" height="13.80" fill="#54b399" rx="0" />
<rect x="1050.90" y="1531.40" width="11.30" height="4.40" fill="#d36086" rx="0" />
<rect x="1050.90" y="1527.20" width="11.30" height="4.20" fill="#9170b8" rx="0" />
<rect x="1066.26" y="1535.80" width="11.30" height="13.80" fill="#54b399" rx="0" />
<rect x="1066.26" y="1531.40" width="11.30" height="4.40" fill="#d36086" rx="0" />
<rect x="1066.26" y="1530.20" width="11.30" height="1.20" fill="#9170b8" rx="0" />
<rect x="1081.61" y="1535.80" width="11.30" height="13.80" fill="#54b399" rx="0" />
<rect x="1081.61" y="1531.40" width="11.30" height="4.40" fill="#d36086" rx="0" />
<rect x="1081.61" y="1522.00" width="11.30" height="9.40" fill="#9170b8" rx="0" />
<rect x="1096.96" y="1535.80" width="11.30" height="13.80" fill="#54b399" rx="0" />
<rect x="1096.96" y="1531.40" width="11.30" height="4.40" fill="#d36086" rx="0" />
<rect x="1096.96" y="1516.40" width="11.30" height="15.00" fill="#9170b8" rx="0" />
<rect x="1112.32" y="1535.80" width="11.30" height="13.80" fill="#54b399" rx="0" />
<rect x="1112.32" y="1531.40" width="11.30" height="4.40" fill="#d36086" rx="0" />
<rect x="1112.32" y="1522.20" width="11.30" height="9.20" fill="#9170b8" rx="0" />
<rect x="1127.67" y="1535.80" width="11.30" height="13.80" fill="#54b399" rx="0" />
<rect x="1127.67" y="1531.40" width="11.30" height="4.40" fill="#d36086" rx="0" />
<rect x="1127.67" y="1521.40" width="11.30" height="10.00" fill="#9170b8" rx="0" />
<rect x="1143.03" y="1535.80" width="11.30" height="13.80" fill="#54b399" rx="0" />
<rect x="1143.03" y="1531.40" width="11.30" height="4.40" fill="#d36086" rx="0" />
<rect x="1143.03" y="1524.00" width="11.30" height="7.40" fill="#9170b8" rx="0" />
<rect x="1158.38" y="1535.80" width="11.30" height="13.80" fill="#54b399" rx="0" />
<rect x="1158.38" y="1531.40" width="11.30" height="4.40" fill="#d36086" rx="0" />
<rect x="1158.38" y="1530.00" width="11.30" height="1.40" fill="#9170b8" rx="0" />
<rect x="1173.74" y="1535.80" width="11.30" height="13.80" fill="#54b399" rx="0" />
<rect x="1173.74" y="1531.40" width="11.30" height="4.40" fill="#d36086" rx="0" />
<rect x="1173.74" y="1529.00" width="11.30" height="2.40" fill="#9170b8" rx="0" />
<rect x="1189.10" y="1535.80" width="11.30" height="13.80" fill="#54b399" rx="0" />
<rect x="1189.10" y="1531.40" width="11.30" height="4.40" fill="#d36086" rx="0" />
<rect x="1189.10" y="1528.80" width="11.30" height="2.60" fill="#9170b8" rx="0" />
<rect x="1204.45" y="1535.80" width="11.30" height="13.80" fill="#54b399" rx="0" />
<rect x="1204.45" y="1531.40" width="11.30" height="4.40" fill="#d36086" rx="0" />
<rect x="1204.45" y="1529.00" width="11.30" height="2.40" fill="#9170b8" rx="0" />
<rect x="1219.81" y="1535.80" width="11.30" height="13.80" fill="#54b399" rx="0" />
<rect x="1219.81" y="1531.40" width="11.30" height="4.40" fill="#d36086" rx="0" />
<rect x="1235.16" y="1535.80" width="11.30" height="13.80" fill="#54b399" rx="0" />
<rect x="1235.16" y="1531.40" width="11.30" height="4.40" fill="#d36086" rx="0" />
<rect x="1235.16" y="1530.00" width="11.30" height="1.40" fill="#9170b8" rx="0" />
<rect x="1250.52" y="1532.80" width="11.30" height="16.80" fill="#54b399" rx="0" />
<rect x="1250.52" y="1528.60" width="11.30" height="4.20" fill="#d36086" rx="0" />
<rect x="1250.52" y="1527.40" width="11.30" height="1.20" fill="#9170b8" rx="0" />
<rect x="1265.87" y="1535.80" width="11.30" height="13.80" fill="#54b399" rx="0" />
<rect x="1265.87" y="1531.40" width="11.30" height="4.40" fill="#d36086" rx="0" />
<rect x="1281.22" y="1535.80" width="11.30" height="13.80" fill="#54b399" rx="0" />
<rect x="1281.22" y="1531.40" width="11.30" height="4.40" fill="#d36086" rx="0" />
<rect x="1296.58" y="1535.80" width="11.30" height="13.80" fill="#54b399" rx="0" />
<rect x="1296.58" y="1531.40" width="11.30" height="4.40" fill="#d36086" rx="0" />
<rect x="1296.58" y="1528.60" width="11.30" height="2.80" fill="#9170b8" rx="0" />
<rect x="1311.93" y="1535.80" width="11.30" height="13.80" fill="#54b399" rx="0" />
<rect x="1311.93" y="1531.40" width="11.30" height="4.40" fill="#d36086" rx="0" />
<rect x="1311.93" y="1528.60" width="11.30" height="2.80" fill="#9170b8" rx="0" />
<rect x="1327.29" y="1535.80" width="11.30" height="13.80" fill="#54b399" rx="0" />
<rect x="1327.29" y="1531.40" width="11.30" height="4.40" fill="#d36086" rx="0" />
<rect x="1342.64" y="1535.80" width="11.30" height="13.80" fill="#54b399" rx="0" />
<rect x="1342.64" y="1531.40" width="11.30" height="4.40" fill="#d36086" rx="0" />
<rect x="1342.64" y="1529.20" width="11.30" height="2.20" fill="#9170b8" rx="0" />
<rect x="1358.00" y="1535.80" width="11.30" height="13.80" fill="#54b399" rx="0" />
<rect x="1358.00" y="1531.40" width="11.30" height="4.40" fill="#d36086" rx="0" />
<rect x="1358.00" y="1529.80" width="11.30" height="1.60" fill="#9170b8" rx="0" />
<rect x="1373.36" y="1535.80" width="11.30" height="13.80" fill="#54b399" rx="0" />
<rect x="1373.36" y="1531.40" width="11.30" height="4.40" fill="#d36086" rx="0" />
<rect x="1373.36" y="1530.60" width="11.30" height="0.80" fill="#9170b8" rx="0" />
<rect x="1388.71" y="1535.80" width="11.30" height="13.80" fill="#54b399" rx="0" />
<rect x="1388.71" y="1531.40" width="11.30" height="4.40" fill="#d36086" rx="0" />
<rect x="1404.07" y="1535.80" width="11.30" height="13.80" fill="#54b399" rx="0" />
<rect x="1404.07" y="1531.40" width="11.30" height="4.40" fill="#d36086" rx="0" />
<rect x="1419.42" y="1535.80" width="11.30" height="13.80" fill="#54b399" rx="0" />
<rect x="1419.42" y="1531.40" width="11.30" height="4.40" fill="#d36086" rx="0" />
<rect x="1419.42" y="1530.60" width="11.30" height="0.80" fill="#9170b8" rx="0" />
<rect x="1434.78" y="1535.80" width="11.30" height="13.80" fill="#54b399" rx="0" />
<rect x="1434.78" y="1531.40" width="11.30" height="4.40" fill="#d36086" rx="0" />
<rect x="1450.13" y="1535.80" width="11.30" height="13.80" fill="#54b399" rx="0" />
<rect x="1450.13" y="1531.40" width="11.30" height="4.40" fill="#d36086" rx="0" />
<rect x="1465.49" y="1535.80" width="11.30" height="13.80" fill="#54b399" rx="0" />
<rect x="1465.49" y="1531.40" width="11.30" height="4.40" fill="#d36086" rx="0" />
<rect x="1465.49" y="1528.00" width="11.30" height="3.40" fill="#9170b8" rx="0" />
<rect x="1480.84" y="1535.80" width="11.30" height="13.80" fill="#54b399" rx="0" />
<rect x="1480.84" y="1531.40" width="11.30" height="4.40" fill="#d36086" rx="0" />
<rect x="1480.84" y="1523.20" width="11.30" height="8.20" fill="#9170b8" rx="0" />
<rect x="1496.20" y="1535.80" width="11.30" height="13.80" fill="#54b399" rx="0" />
<rect x="1496.20" y="1531.40" width="11.30" height="4.40" fill="#d36086" rx="0" />
<rect x="1496.20" y="1524.40" width="11.30" height="7.00" fill="#9170b8" rx="0" />
<rect x="1511.55" y="1535.80" width="11.30" height="13.80" fill="#54b399" rx="0" />
<rect x="1511.55" y="1531.40" width="11.30" height="4.40" fill="#d36086" rx="0" />
<rect x="1511.55" y="1528.00" width="11.30" height="3.40" fill="#9170b8" rx="0" />
<rect x="1526.90" y="1535.80" width="11.30" height="13.80" fill="#54b399" rx="0" />
<rect x="1526.90" y="1531.40" width="11.30" height="4.40" fill="#d36086" rx="0" />
<rect x="1542.26" y="1535.80" width="11.30" height="13.80" fill="#54b399" rx="0" />
<rect x="1542.26" y="1531.40" width="11.30" height="4.40" fill="#d36086" rx="0" />
<rect x="1557.62" y="1535.80" width="11.30" height="13.80" fill="#54b399" rx="0" />
<rect x="1557.62" y="1531.40" width="11.30" height="4.40" fill="#d36086" rx="0" />
<rect x="1572.97" y="1535.80" width="11.30" height="13.80" fill="#54b399" rx="0" />
<rect x="1572.97" y="1531.40" width="11.30" height="4.40" fill="#d36086" rx="0" />
<rect x="1588.33" y="1535.80" width="11.30" height="13.80" fill="#54b399" rx="0" />
<rect x="1588.33" y="1531.40" width="11.30" height="4.40" fill="#d36086" rx="0" />
<rect x="1603.68" y="1535.80" width="11.30" height="13.80" fill="#54b399" rx="0" />
<rect x="1603.68" y="1531.40" width="11.30" height="4.40" fill="#d36086" rx="0" />
<rect x="1619.04" y="1535.80" width="11.30" height="13.80" fill="#54b399" rx="0" />
<rect x="1619.04" y="1531.40" width="11.30" height="4.40" fill="#d36086" rx="0" />
<rect x="1619.04" y="1530.00" width="11.30" height="1.40" fill="#9170b8" rx="0" />
<rect x="1634.39" y="1535.80" width="11.30" height="13.80" fill="#54b399" rx="0" />
<rect x="1634.39" y="1531.40" width="11.30" height="4.40" fill="#d36086" rx="0" />
<rect x="1649.75" y="1535.80" width="11.30" height="13.80" fill="#54b399" rx="0" />
<rect x="1649.75" y="1531.40" width="11.30" height="4.40" fill="#d36086" rx="0" />
<rect x="1665.10" y="1535.80" width="11.30" height="13.80" fill="#54b399" rx="0" />
<rect x="1665.10" y="1531.40" width="11.30" height="4.40" fill="#d36086" rx="0" />
<rect x="1665.10" y="1530.00" width="11.30" height="1.40" fill="#9170b8" rx="0" />
<rect x="1680.46" y="1535.80" width="11.30" height="13.80" fill="#54b399" rx="0" />
<rect x="1680.46" y="1531.40" width="11.30" height="4.40" fill="#d36086" rx="0" />
<rect x="1695.81" y="1535.80" width="11.30" height="13.80" fill="#54b399" rx="0" />
<rect x="1695.81" y="1531.00" width="11.30" height="4.80" fill="#6092c0" rx="0" />
<rect x="1695.81" y="1526.40" width="11.30" height="4.60" fill="#d36086" rx="0" />
<rect x="1711.17" y="1535.80" width="11.30" height="13.80" fill="#54b399" rx="0" />
<rect x="1711.17" y="1522.40" width="11.30" height="13.40" fill="#6092c0" rx="0" />
<rect x="1711.17" y="1518.40" width="11.30" height="4.00" fill="#d36086" rx="0" />
<rect x="1711.17" y="1516.80" width="11.30" height="1.60" fill="#9170b8" rx="0" />
<rect x="1726.52" y="1535.80" width="11.30" height="13.80" fill="#54b399" rx="0" />
<rect x="1726.52" y="1522.40" width="11.30" height="13.40" fill="#6092c0" rx="0" />
<rect x="1726.52" y="1518.00" width="11.30" height="4.40" fill="#d36086" rx="0" />
<rect x="1726.52" y="1514.00" width="11.30" height="4.00" fill="#9170b8" rx="0" />
<rect x="1741.88" y="1535.80" width="11.30" height="13.80" fill="#54b399" rx="0" />
<rect x="1741.88" y="1522.40" width="11.30" height="13.40" fill="#6092c0" rx="0" />
<rect x="1741.88" y="1518.00" width="11.30" height="4.40" fill="#d36086" rx="0" />
<rect x="1741.88" y="1508.60" width="11.30" height="9.40" fill="#9170b8" rx="0" />
<rect x="1757.23" y="1535.80" width="11.30" height="13.80" fill="#54b399" rx="0" />
<rect x="1757.23" y="1522.40" width="11.30" height="13.40" fill="#6092c0" rx="0" />
<rect x="1757.23" y="1518.00" width="11.30" height="4.40" fill="#d36086" rx="0" />
<rect x="1757.23" y="1511.60" width="11.30" height="6.40" fill="#9170b8" rx="0" />
<rect x="1772.59" y="1535.80" width="11.30" height="13.80" fill="#54b399" rx="0" />
<rect x="1772.59" y="1522.40" width="11.30" height="13.40" fill="#6092c0" rx="0" />
<rect x="1772.59" y="1517.60" width="11.30" height="4.80" fill="#d36086" rx="0" />
<rect x="1787.94" y="1535.80" width="11.30" height="13.80" fill="#54b399" rx="0" />
<rect x="1787.94" y="1522.40" width="11.30" height="13.40" fill="#6092c0" rx="0" />
<rect x="1787.94" y="1517.80" width="11.30" height="4.60" fill="#d36086" rx="0" />
<rect x="1803.30" y="1535.80" width="11.30" height="13.80" fill="#54b399" rx="0" />
<rect x="1803.30" y="1522.40" width="11.30" height="13.40" fill="#6092c0" rx="0" />
<rect x="1803.30" y="1518.40" width="11.30" height="4.00" fill="#d36086" rx="0" />
<rect x="1803.30" y="1516.00" width="11.30" height="2.40" fill="#9170b8" rx="0" />
<rect x="1818.65" y="1535.80" width="11.30" height="13.80" fill="#54b399" rx="0" />
<rect x="1818.65" y="1522.40" width="11.30" height="13.40" fill="#6092c0" rx="0" />
<rect x="1818.65" y="1518.00" width="11.30" height="4.40" fill="#d36086" rx="0" />
<rect x="1818.65" y="1505.00" width="11.30" height="13.00" fill="#9170b8" rx="0" />
<rect x="1834.01" y="1535.80" width="11.30" height="13.80" fill="#54b399" rx="0" />
<rect x="1834.01" y="1522.40" width="11.30" height="13.40" fill="#6092c0" rx="0" />
<rect x="1834.01" y="1518.40" width="11.30" height="4.00" fill="#d36086" rx="0" />
<rect x="1834.01" y="1499.80" width="11.30" height="18.60" fill="#9170b8" rx="0" />
<rect x="1849.36" y="1535.80" width="11.30" height="13.80" fill="#54b399" rx="0" />
<rect x="1849.36" y="1522.60" width="11.30" height="13.20" fill="#6092c0" rx="0" />
<rect x="1849.36" y="1518.40" width="11.30" height="4.20" fill="#d36086" rx="0" />
<rect x="1849.36" y="1509.80" width="11.30" height="8.60" fill="#9170b8" rx="0" />
<rect x="1864.72" y="1535.80" width="11.30" height="13.80" fill="#54b399" rx="0" />
<rect x="1864.72" y="1522.20" width="11.30" height="13.60" fill="#6092c0" rx="0" />
<rect x="1864.72" y="1518.00" width="11.30" height="4.20" fill="#d36086" rx="0" />
<rect x="1864.72" y="1515.20" width="11.30" height="2.80" fill="#9170b8" rx="0" />
<rect x="1880.07" y="1535.40" width="11.30" height="14.20" fill="#54b399" rx="0" />
<rect x="1880.07" y="1521.40" width="11.30" height="14.00" fill="#6092c0" rx="0" />
<rect x="1880.07" y="1517.00" width="11.30" height="4.40" fill="#d36086" rx="0" />
<rect x="1895.43" y="1527.00" width="11.30" height="22.60" fill="#54b399" rx="0" />
<rect x="1895.43" y="1504.80" width="11.30" height="22.20" fill="#6092c0" rx="0" />
<rect x="1895.43" y="1500.40" width="11.30" height="4.40" fill="#d36086" rx="0" />
<rect x="1910.78" y="1526.60" width="11.30" height="23.00" fill="#54b399" rx="0" />
<rect x="1910.78" y="1504.60" width="11.30" height="22.00" fill="#6092c0" rx="0" />
<rect x="1910.78" y="1500.20" width="11.30" height="4.40" fill="#d36086" rx="0" />
<rect x="1910.78" y="1498.40" width="11.30" height="1.80" fill="#9170b8" rx="0" />
<rect x="1926.13" y="1526.60" width="11.30" height="23.00" fill="#54b399" rx="0" />
<rect x="1926.13" y="1504.40" width="11.30" height="22.20" fill="#6092c0" rx="0" />
<rect x="1926.13" y="1500.00" width="11.30" height="4.40" fill="#d36086" rx="0" />
<rect x="1941.49" y="1529.00" width="11.30" height="20.60" fill="#54b399" rx="0" />
<rect x="1941.49" y="1509.00" width="11.30" height="20.00" fill="#6092c0" rx="0" />
<rect x="1941.49" y="1504.80" width="11.30" height="4.20" fill="#d36086" rx="0" />
<rect x="1941.49" y="1503.00" width="11.30" height="1.80" fill="#9170b8" rx="0" />
<rect x="1956.85" y="1535.80" width="11.30" height="13.80" fill="#54b399" rx="0" />
<rect x="1956.85" y="1522.40" width="11.30" height="13.40" fill="#6092c0" rx="0" />
<rect x="1956.85" y="1518.20" width="11.30" height="4.20" fill="#d36086" rx="0" />
<rect x="1956.85" y="1508.00" width="11.30" height="10.20" fill="#9170b8" rx="0" />
<rect x="1972.20" y="1535.80" width="11.30" height="13.80" fill="#54b399" rx="0" />
<rect x="1972.20" y="1522.60" width="11.30" height="13.20" fill="#6092c0" rx="0" />
<rect x="1972.20" y="1518.60" width="11.30" height="4.00" fill="#d36086" rx="0" />
<rect x="1972.20" y="1509.60" width="11.30" height="9.00" fill="#9170b8" rx="0" />
<rect x="1987.56" y="1535.80" width="11.30" height="13.80" fill="#54b399" rx="0" />
<rect x="1987.56" y="1522.80" width="11.30" height="13.00" fill="#6092c0" rx="0" />
<rect x="1987.56" y="1518.80" width="11.30" height="4.00" fill="#d36086" rx="0" />
<rect x="1987.56" y="1514.20" width="11.30" height="4.60" fill="#9170b8" rx="0" />
<rect x="2002.91" y="1535.80" width="11.30" height="13.80" fill="#54b399" rx="0" />
<rect x="2002.91" y="1522.80" width="11.30" height="13.00" fill="#6092c0" rx="0" />
<rect x="2002.91" y="1518.40" width="11.30" height="4.40" fill="#d36086" rx="0" />
<rect x="2018.27" y="1529.60" width="11.30" height="20.00" fill="#54b399" rx="0" />
<rect x="2018.27" y="1510.00" width="11.30" height="19.60" fill="#6092c0" rx="0" />
<rect x="2018.27" y="1505.60" width="11.30" height="4.40" fill="#d36086" rx="0" />
<rect x="2033.62" y="1527.60" width="11.30" height="22.00" fill="#54b399" rx="0" />
<rect x="2033.62" y="1506.00" width="11.30" height="21.60" fill="#6092c0" rx="0" />
<rect x="2033.62" y="1501.60" width="11.30" height="4.40" fill="#d36086" rx="0" />
<rect x="2048.97" y="1527.60" width="11.30" height="22.00" fill="#54b399" rx="0" />
<rect x="2048.97" y="1506.40" width="11.30" height="21.20" fill="#6092c0" rx="0" />
<rect x="2048.97" y="1502.00" width="11.30" height="4.40" fill="#d36086" rx="0" />
<rect x="2064.33" y="1527.60" width="11.30" height="22.00" fill="#54b399" rx="0" />
<rect x="2064.33" y="1506.20" width="11.30" height="21.40" fill="#6092c0" rx="0" />
<rect x="2064.33" y="1501.80" width="11.30" height="4.40" fill="#d36086" rx="0" />
<rect x="2064.33" y="1500.00" width="11.30" height="1.80" fill="#9170b8" rx="0" />
<rect x="2079.68" y="1527.60" width="11.30" height="22.00" fill="#54b399" rx="0" />
<rect x="2079.68" y="1506.20" width="11.30" height="21.40" fill="#6092c0" rx="0" />
<rect x="2079.68" y="1502.00" width="11.30" height="4.20" fill="#d36086" rx="0" />
<rect x="2079.68" y="1498.20" width="11.30" height="3.80" fill="#9170b8" rx="0" />
<rect x="2095.04" y="1527.60" width="11.30" height="22.00" fill="#54b399" rx="0" />
<rect x="2095.04" y="1506.40" width="11.30" height="21.20" fill="#6092c0" rx="0" />
<rect x="2095.04" y="1502.00" width="11.30" height="4.40" fill="#d36086" rx="0" />
<rect x="2095.04" y="1497.20" width="11.30" height="4.80" fill="#9170b8" rx="0" />
<rect x="2110.39" y="1527.60" width="11.30" height="22.00" fill="#54b399" rx="0" />
<rect x="2110.39" y="1506.20" width="11.30" height="21.40" fill="#6092c0" rx="0" />
<rect x="2110.39" y="1501.60" width="11.30" height="4.60" fill="#d36086" rx="0" />
<rect x="2110.39" y="1500.60" width="11.30" height="1.00" fill="#9170b8" rx="0" />
<rect x="2125.75" y="1527.60" width="11.30" height="22.00" fill="#54b399" rx="0" />
<rect x="2125.75" y="1506.20" width="11.30" height="21.40" fill="#6092c0" rx="0" />
<rect x="2125.75" y="1501.60" width="11.30" height="4.60" fill="#d36086" rx="0" />
<rect x="2125.75" y="1501.20" width="11.30" height="0.40" fill="#9170b8" rx="0" />
<rect x="2141.11" y="1527.60" width="11.30" height="22.00" fill="#54b399" rx="0" />
<rect x="2141.11" y="1506.40" width="11.30" height="21.20" fill="#6092c0" rx="0" />
<rect x="2141.11" y="1502.00" width="11.30" height="4.40" fill="#d36086" rx="0" />
<rect x="2156.46" y="1527.60" width="11.30" height="22.00" fill="#54b399" rx="0" />
<rect x="2156.46" y="1506.20" width="11.30" height="21.40" fill="#6092c0" rx="0" />
<rect x="2156.46" y="1501.80" width="11.30" height="4.40" fill="#d36086" rx="0" />
<rect x="2171.82" y="1527.60" width="11.30" height="22.00" fill="#54b399" rx="0" />
<rect x="2171.82" y="1506.40" width="11.30" height="21.20" fill="#6092c0" rx="0" />
<rect x="2171.82" y="1502.00" width="11.30" height="4.40" fill="#d36086" rx="0" />
<rect x="2187.17" y="1532.60" width="11.30" height="17.00" fill="#54b399" rx="0" />
<rect x="2187.17" y="1516.60" width="11.30" height="16.00" fill="#6092c0" rx="0" />
<rect x="2187.17" y="1512.40" width="11.30" height="4.20" fill="#d36086" rx="0" />
<rect x="2187.17" y="1510.60" width="11.30" height="1.80" fill="#9170b8" rx="0" />
<rect x="2202.53" y="1535.60" width="11.30" height="14.00" fill="#54b399" rx="0" />
<rect x="2202.53" y="1522.20" width="11.30" height="13.40" fill="#6092c0" rx="0" />
<rect x="2202.53" y="1517.80" width="11.30" height="4.40" fill="#d36086" rx="0" />
<rect x="2217.88" y="1535.60" width="11.30" height="14.00" fill="#54b399" rx="0" />
<rect x="2217.88" y="1522.40" width="11.30" height="13.20" fill="#6092c0" rx="0" />
<rect x="2217.88" y="1518.00" width="11.30" height="4.40" fill="#d36086" rx="0" />
<rect x="2233.24" y="1536.00" width="11.30" height="13.60" fill="#54b399" rx="0" />
<rect x="2233.24" y="1522.80" width="11.30" height="13.20" fill="#6092c0" rx="0" />
<rect x="2233.24" y="1518.40" width="11.30" height="4.40" fill="#d36086" rx="0" />
<rect x="2248.59" y="1536.20" width="11.30" height="13.40" fill="#54b399" rx="0" />
<rect x="2248.59" y="1522.80" width="11.30" height="13.40" fill="#6092c0" rx="0" />
<rect x="2248.59" y="1518.40" width="11.30" height="4.40" fill="#d36086" rx="0" />
<rect x="2263.95" y="1529.60" width="11.30" height="20.00" fill="#54b399" rx="0" />
<rect x="2263.95" y="1516.60" width="11.30" height="13.00" fill="#6092c0" rx="0" />
<rect x="2263.95" y="1509.60" width="11.30" height="7.00" fill="#d36086" rx="0" />
<rect x="2279.30" y="1533.60" width="11.30" height="16.00" fill="#54b399" rx="0" />
<rect x="2279.30" y="1520.60" width="11.30" height="13.00" fill="#6092c0" rx="0" />
<rect x="2279.30" y="1514.60" width="11.30" height="6.00" fill="#d36086" rx="0" />
<rect x="2279.30" y="1512.20" width="11.30" height="2.40" fill="#9170b8" rx="0" />
<rect x="2294.66" y="1534.60" width="11.30" height="15.00" fill="#54b399" rx="0" />
<rect x="2294.66" y="1521.60" width="11.30" height="13.00" fill="#6092c0" rx="0" />
<rect x="2294.66" y="1515.60" width="11.30" height="6.00" fill="#d36086" rx="0" />
<rect x="2294.66" y="1508.00" width="11.30" height="7.60" fill="#9170b8" rx="0" />
<rect x="2310.01" y="1535.00" width="11.30" height="14.60" fill="#54b399" rx="0" />
<rect x="2310.01" y="1521.80" width="11.30" height="13.20" fill="#6092c0" rx="0" />
<rect x="2310.01" y="1516.00" width="11.30" height="5.80" fill="#d36086" rx="0" />
<rect x="2310.01" y="1509.60" width="11.30" height="6.40" fill="#9170b8" rx="0" />
<rect x="2325.36" y="1534.80" width="11.30" height="14.80" fill="#54b399" rx="0" />
<rect x="2325.36" y="1521.80" width="11.30" height="13.00" fill="#6092c0" rx="0" />
<rect x="2325.36" y="1515.80" width="11.30" height="6.00" fill="#d36086" rx="0" />
<rect x="2325.36" y="1513.60" width="11.30" height="2.20" fill="#9170b8" rx="0" />
<rect x="2340.72" y="1534.80" width="11.30" height="14.80" fill="#54b399" rx="0" />
<rect x="2340.72" y="1521.80" width="11.30" height="13.00" fill="#6092c0" rx="0" />
<rect x="2340.72" y="1515.60" width="11.30" height="6.20" fill="#d36086" rx="0" />
<rect x="2356.07" y="1534.80" width="11.30" height="14.80" fill="#54b399" rx="0" />
<rect x="2356.07" y="1521.80" width="11.30" height="13.00" fill="#6092c0" rx="0" />
<rect x="2356.07" y="1515.60" width="11.30" height="6.20" fill="#d36086" rx="0" />
<rect x="2356.07" y="1514.80" width="11.30" height="0.80" fill="#9170b8" rx="0" />
<rect x="2371.43" y="1534.80" width="11.30" height="14.80" fill="#54b399" rx="0" />
<rect x="2371.43" y="1521.80" width="11.30" height="13.00" fill="#6092c0" rx="0" />
<rect x="2371.43" y="1515.60" width="11.30" height="6.20" fill="#d36086" rx="0" />
<rect x="2371.43" y="1514.80" width="11.30" height="0.80" fill="#9170b8" rx="0" />
<rect x="2386.78" y="1534.80" width="11.30" height="14.80" fill="#54b399" rx="0" />
<rect x="2386.78" y="1521.60" width="11.30" height="13.20" fill="#6092c0" rx="0" />
<rect x="2386.78" y="1515.60" width="11.30" height="6.00" fill="#d36086" rx="0" />
<rect x="2402.14" y="1534.80" width="11.30" height="14.80" fill="#54b399" rx="0" />
<rect x="2402.14" y="1521.60" width="11.30" height="13.20" fill="#6092c0" rx="0" />
<rect x="2402.14" y="1515.60" width="11.30" height="6.00" fill="#d36086" rx="0" />
<rect x="2402.14" y="1514.20" width="11.30" height="1.40" fill="#9170b8" rx="0" />
<rect x="2417.49" y="1534.20" width="11.30" height="15.40" fill="#54b399" rx="0" />
<rect x="2417.49" y="1520.20" width="11.30" height="14.00" fill="#6092c0" rx="0" />
<rect x="2417.49" y="1514.40" width="11.30" height="5.80" fill="#d36086" rx="0" />
<rect x="2417.49" y="1513.80" width="11.30" height="0.60" fill="#9170b8" rx="0" />
<rect x="2432.85" y="1534.40" width="11.30" height="15.20" fill="#54b399" rx="0" />
<rect x="2432.85" y="1520.80" width="11.30" height="13.60" fill="#6092c0" rx="0" />
<rect x="2432.85" y="1515.00" width="11.30" height="5.80" fill="#d36086" rx="0" />
<rect x="2448.20" y="1534.40" width="11.30" height="15.20" fill="#54b399" rx="0" />
<rect x="2448.20" y="1520.80" width="11.30" height="13.60" fill="#6092c0" rx="0" />
<rect x="2448.20" y="1514.60" width="11.30" height="6.20" fill="#d36086" rx="0" />
<rect x="2463.56" y="1534.40" width="11.30" height="15.20" fill="#54b399" rx="0" />
<rect x="2463.56" y="1520.80" width="11.30" height="13.60" fill="#6092c0" rx="0" />
<rect x="2463.56" y="1515.00" width="11.30" height="5.80" fill="#d36086" rx="0" />
<rect x="2478.91" y="1534.20" width="11.30" height="15.40" fill="#54b399" rx="0" />
<rect x="2478.91" y="1520.40" width="11.30" height="13.80" fill="#6092c0" rx="0" />
<rect x="2478.91" y="1514.40" width="11.30" height="6.00" fill="#d36086" rx="0" />
<rect x="2494.27" y="1534.40" width="11.30" height="15.20" fill="#54b399" rx="0" />
<rect x="2494.27" y="1520.80" width="11.30" height="13.60" fill="#6092c0" rx="0" />
<rect x="2494.27" y="1514.80" width="11.30" height="6.00" fill="#d36086" rx="0" />
<rect x="2509.62" y="1534.40" width="11.30" height="15.20" fill="#54b399" rx="0" />
<rect x="2509.62" y="1520.80" width="11.30" height="13.60" fill="#6092c0" rx="0" />
<rect x="2509.62" y="1515.00" width="11.30" height="5.80" fill="#d36086" rx="0" />
<rect x="2509.62" y="1513.40" width="11.30" height="1.60" fill="#9170b8" rx="0" />
<rect x="2524.98" y="1538.40" width="11.30" height="11.20" fill="#54b399" rx="0" />
<rect x="2524.98" y="1528.00" width="11.30" height="10.40" fill="#6092c0" rx="0" />
<rect x="2524.98" y="1524.00" width="11.30" height="4.00" fill="#d36086" rx="0" />
<rect x="2524.98" y="1517.20" width="11.30" height="6.80" fill="#9170b8" rx="0" />
<circle cx="2705.7" cy="1506.7" r="5" fill="#54b399"/>
<circle cx="2705.7" cy="1534.5" r="5" fill="#6092c0"/>
<circle cx="2705.7" cy="1561.5" r="5" fill="#d36086"/>
<circle cx="2705.7" cy="1589.3000000000002" r="5" fill="#9170b8"/>
<polygon points="2892.3,1456.2 2895.1,1453.2 2897.9,1456.2" fill="#b1b2b9"/>
<polygon points="2892.3,1588.0 2895.1,1591.0 2897.9,1588.0" fill="#b1b2b9"/>
<polyline points="362.85,1681.40 370.00,1687.80 377.15,1681.40" fill="none" stroke="#2a2d36" stroke-width="1.9" stroke-linecap="round" stroke-linejoin="round"/>
<line x1="2779.30" y1="1683.30" x2="2789.80" y2="1683.30" stroke="#343741" stroke-width="1.3" stroke-linecap="round"/>
<polyline points="2786.20,1679.70 2789.80,1683.30 2786.20,1686.90" fill="none" stroke="#343741" stroke-width="1.3" stroke-linecap="round" stroke-linejoin="round"/>
<line x1="452.60" y1="1742.90" x2="452.60" y2="1754.20" stroke="#1a1c21" stroke-width="1.4" stroke-linecap="round"/>
<polyline points="447.20,1748.30 452.60,1742.90 458.00,1748.30" fill="none" stroke="#1a1c21" stroke-width="1.4" stroke-linecap="round" stroke-linejoin="round"/>
<line x1="574.20" y1="1741.60" x2="574.20" y2="1755.60" stroke="#8e9199" stroke-width="1.2" stroke-linecap="round"/>
<polyline points="569.60,1746.20 574.20,1741.60 578.80,1746.20" fill="none" stroke="#8e9199" stroke-width="1.2" stroke-linecap="round" stroke-linejoin="round"/>
<polyline points="569.60,1751.00 574.20,1755.60 578.80,1751.00" fill="none" stroke="#8e9199" stroke-width="1.2" stroke-linecap="round" stroke-linejoin="round"/>
<line x1="1033.30" y1="1741.60" x2="1033.30" y2="1755.60" stroke="#8e9199" stroke-width="1.2" stroke-linecap="round"/>
<polyline points="1028.70,1746.20 1033.30,1741.60 1037.90,1746.20" fill="none" stroke="#8e9199" stroke-width="1.2" stroke-linecap="round" stroke-linejoin="round"/>
<polyline points="1028.70,1751.00 1033.30,1755.60 1037.90,1751.00" fill="none" stroke="#8e9199" stroke-width="1.2" stroke-linecap="round" stroke-linejoin="round"/>
<line x1="1526.20" y1="1741.60" x2="1526.20" y2="1755.60" stroke="#8e9199" stroke-width="1.2" stroke-linecap="round"/>
<polyline points="1521.60,1746.20 1526.20,1741.60 1530.80,1746.20" fill="none" stroke="#8e9199" stroke-width="1.2" stroke-linecap="round" stroke-linejoin="round"/>
<polyline points="1521.60,1751.00 1526.20,1755.60 1530.80,1751.00" fill="none" stroke="#8e9199" stroke-width="1.2" stroke-linecap="round" stroke-linejoin="round"/>
<line x1="1976.20" y1="1741.60" x2="1976.20" y2="1755.60" stroke="#8e9199" stroke-width="1.2" stroke-linecap="round"/>
<polyline points="1971.60,1746.20 1976.20,1741.60 1980.80,1746.20" fill="none" stroke="#8e9199" stroke-width="1.2" stroke-linecap="round" stroke-linejoin="round"/>
<polyline points="1971.60,1751.00 1976.20,1755.60 1980.80,1751.00" fill="none" stroke="#8e9199" stroke-width="1.2" stroke-linecap="round" stroke-linejoin="round"/>
<line x1="2461.20" y1="1741.60" x2="2461.20" y2="1755.60" stroke="#8e9199" stroke-width="1.2" stroke-linecap="round"/>
<polyline points="2456.60,1746.20 2461.20,1741.60 2465.80,1746.20" fill="none" stroke="#8e9199" stroke-width="1.2" stroke-linecap="round" stroke-linejoin="round"/>
<polyline points="2456.60,1751.00 2461.20,1755.60 2465.80,1751.00" fill="none" stroke="#8e9199" stroke-width="1.2" stroke-linecap="round" stroke-linejoin="round"/>
</svg>
<span class="t" style="top:16.47px;font-size:27.8px;color:#fff;letter-spacing:0.201px;left:54.00px;">elastic</span>
<span class="t" style="top:21.32px;font-size:17.7px;color:#b6bac2;letter-spacing:0.411px;left:1117.00px;">Find apps, content, and more.</span>
<span class="t" style="top:20.66px;font-size:15.4px;color:#000;left:2937.80px;transform:translateX(-50%);">E</span>
<span class="t" style="top:81.10px;font-size:15px;color:#000;left:79.00px;transform:translateX(-50%);">D</span>
<span class="t" style="top:81.43px;font-size:15.2px;color:#0061a6;letter-spacing:0.568px;-webkit-text-stroke:0.2px #0061a6;left:129.30px;">Observability</span>
<span class="t" style="top:81.43px;font-size:15.2px;color:#646a77;letter-spacing:0.529px;-webkit-text-stroke:0.2px #646a77;left:259.60px;">Overview</span>
<span class="t" style="top:79.85px;font-size:17.9px;color:#0061a6;letter-spacing:0.482px;-webkit-text-stroke:0.25px #0061a6;left:2877.70px;">Add data</span>
<span class="t" style="top:159.88px;font-size:19.4px;color:#1a1c21;font-weight:700;letter-spacing:0.628px;left:79.60px;">Observability</span>
<span class="t" style="top:233.74px;font-size:17.2px;color:#006bb8;font-weight:700;letter-spacing:0.695px;text-decoration:underline;left:24.50px;">Overview</span>
<span class="t" style="top:268.35px;font-size:17.6px;color:#343741;letter-spacing:0.400px;left:24.40px;">Alerts</span>
<span class="t" style="top:303.55px;font-size:17.6px;color:#343741;letter-spacing:0.400px;left:24.40px;">SLOs</span>
<span class="t" style="top:338.75px;font-size:17.6px;color:#343741;letter-spacing:0.400px;left:24.40px;">Cases</span>
<span class="t" style="top:373.45px;font-size:17.6px;color:#343741;letter-spacing:0.400px;left:24.40px;">AI Assistant</span>
<span class="t" style="top:435.52px;font-size:17.4px;color:#343741;font-weight:700;letter-spacing:0.300px;left:24.40px;">Logs</span>
<span class="t" style="top:473.35px;font-size:17.6px;color:#343741;letter-spacing:0.400px;left:24.40px;">Explorer</span>
<span class="t" style="top:508.55px;font-size:17.6px;color:#343741;letter-spacing:0.400px;left:24.40px;">Stream</span>
<span class="t" style="top:543.75px;font-size:17.6px;color:#343741;letter-spacing:0.400px;left:24.40px;">Anomalies</span>
<span class="t" style="top:578.45px;font-size:17.6px;color:#343741;letter-spacing:0.400px;left:24.40px;">Categories</span>
<span class="t" style="top:640.52px;font-size:17.4px;color:#343741;font-weight:700;letter-spacing:0.300px;left:24.40px;">Infrastructure</span>
<span class="t" style="top:678.35px;font-size:17.6px;color:#343741;letter-spacing:0.400px;left:24.40px;">Inventory</span>
<span class="t" style="top:713.55px;font-size:17.6px;color:#343741;letter-spacing:0.400px;left:24.40px;">Metrics Explorer</span>
<span class="t" style="top:748.35px;font-size:17.6px;color:#343741;letter-spacing:0.400px;left:24.40px;">Hosts</span>
<span class="t" style="top:810.32px;font-size:17.4px;color:#343741;font-weight:700;letter-spacing:0.300px;left:24.40px;">APM</span>
<span class="t" style="top:848.55px;font-size:17.6px;color:#343741;letter-spacing:0.400px;left:24.40px;">Services</span>
<span class="t" style="top:883.75px;font-size:17.6px;color:#343741;letter-spacing:0.400px;left:24.40px;">Traces</span>
<span class="t" style="top:918.45px;font-size:17.6px;color:#343741;letter-spacing:0.400px;left:24.40px;">Dependencies</span>
<span class="t" style="top:980.52px;font-size:17.4px;color:#343741;font-weight:700;letter-spacing:0.300px;left:24.40px;">Synthetics</span>
<span class="t" style="top:1018.35px;font-size:17.6px;color:#343741;letter-spacing:0.400px;left:24.40px;">Monitors</span>
<span class="t" style="top:1053.55px;font-size:17.6px;color:#343741;letter-spacing:0.400px;left:24.40px;">TLS Certificates</span>
<span class="t" style="top:1115.62px;font-size:17.4px;color:#343741;font-weight:700;letter-spacing:0.300px;left:24.40px;">User Experience</span>
<span class="t" style="top:1153.45px;font-size:17.6px;color:#343741;letter-spacing:0.400px;left:24.40px;">Dashboard</span>
<span class="t" style="top:476.22px;font-size:11.2px;color:#1a1c21;font-weight:700;letter-spacing:0.350px;left:132.53px;transform:translateX(-50%);">BETA</span>
<span class="t" style="top:751.22px;font-size:11.2px;color:#1a1c21;font-weight:700;letter-spacing:0.350px;left:112.83px;transform:translateX(-50%);">BETA</span>
<span class="t" style="top:151.95px;font-size:44px;color:#1a1c21;font-weight:700;letter-spacing:0.188px;-webkit-text-stroke:0.5px #1a1c21;left:336.00px;">Overview</span>
<span class="t" style="top:166.15px;font-size:17.9px;color:#343741;letter-spacing:0.338px;left:2535.00px;">Today</span>
<span class="t" style="top:166.25px;font-size:17.9px;color:#fff;font-weight:700;letter-spacing:-0.538px;left:2663.20px;">Refresh</span>
<span class="t" style="top:166.25px;font-size:17.9px;color:#343741;letter-spacing:0.402px;-webkit-text-stroke:0.2px #343741;left:2809.20px;">Data assistant</span>
<span class="t" style="top:284.80px;font-size:17.6px;color:#1a1c21;font-weight:700;letter-spacing:0.128px;left:355.60px;">Collect and analyze logs in observability</span>
<span class="t" style="top:307.73px;font-size:15.2px;color:#4a4f5a;letter-spacing:0.397px;left:355.60px;">Onboard your data in up to 5 minutes to start analysing it straight away.</span>
<span class="t" style="top:294.45px;font-size:17.9px;color:#0061a6;letter-spacing:0.398px;-webkit-text-stroke:0.3px #0061a6;left:2678.00px;">Dismiss</span>
<span class="t" style="top:294.45px;font-size:17.9px;color:#0061a6;letter-spacing:0.648px;-webkit-text-stroke:0.3px #0061a6;left:2805.60px;">Get started</span>
<span class="t" style="top:400.92px;font-size:19.7px;color:#1a1c21;font-weight:700;letter-spacing:0.637px;left:390.60px;">Alerts</span>
<span class="t" style="top:402.83px;font-size:15.2px;color:#343741;letter-spacing:0.474px;-webkit-text-stroke:0.15px #343741;left:2828.70px;">Show alerts</span>
<span class="t" style="top:458.74px;font-size:27.6px;color:#6092c0;font-weight:700;left:377.00px;transform:scaleX(1.0325);transform-origin:0 50%;">27</span>
<span class="t" style="top:491.34px;font-size:17.2px;color:#69707d;letter-spacing:0.653px;left:377.00px;">Alerts</span>
<span class="t" style="top:458.74px;font-size:27.6px;color:#bd271e;font-weight:700;left:468.20px;">1</span>
<span class="t" style="top:491.34px;font-size:17.2px;color:#69707d;letter-spacing:0.766px;left:469.20px;">Active now</span>
<span class="t" style="top:562.99px;font-size:12.3px;color:#6f747e;left:394.80px;transform:translateX(-100%);">2</span>
<span class="t" style="top:562.99px;font-size:12.3px;color:#6f747e;left:2884.30px;">2</span>
<span class="t" style="top:631.69px;font-size:12.3px;color:#6f747e;left:394.80px;transform:translateX(-100%);">1</span>
<span class="t" style="top:631.69px;font-size:12.3px;color:#6f747e;left:2884.30px;">1</span>
<span class="t" style="top:700.39px;font-size:12.3px;color:#6f747e;left:394.80px;transform:translateX(-100%);">0</span>
<span class="t" style="top:700.39px;font-size:12.3px;color:#6f747e;left:2884.30px;">0</span>
<span class="t" style="top:719.59px;font-size:12.3px;color:#6f747e;letter-spacing:0.955px;left:410.20px;">00:00</span>
<span class="t" style="top:719.59px;font-size:12.3px;color:#6f747e;letter-spacing:0.955px;left:513.61px;">01:00</span>
<span class="t" style="top:719.59px;font-size:12.3px;color:#6f747e;letter-spacing:0.955px;left:617.01px;">02:00</span>
<span class="t" style="top:719.59px;font-size:12.3px;color:#6f747e;letter-spacing:0.955px;left:720.42px;">03:00</span>
<span class="t" style="top:719.59px;font-size:12.3px;color:#6f747e;letter-spacing:0.955px;left:823.82px;">04:00</span>
<span class="t" style="top:719.59px;font-size:12.3px;color:#6f747e;letter-spacing:0.955px;left:927.23px;">05:00</span>
<span class="t" style="top:719.59px;font-size:12.3px;color:#6f747e;letter-spacing:0.955px;left:1030.63px;">06:00</span>
<span class="t" style="top:719.59px;font-size:12.3px;color:#6f747e;letter-spacing:0.955px;left:1134.04px;">07:00</span>
<span class="t" style="top:719.59px;font-size:12.3px;color:#6f747e;letter-spacing:0.955px;left:1237.44px;">08:00</span>
<span class="t" style="top:719.59px;font-size:12.3px;color:#6f747e;letter-spacing:0.955px;left:1340.85px;">09:00</span>
<span class="t" style="top:719.59px;font-size:12.3px;color:#6f747e;letter-spacing:0.955px;left:1444.26px;">10:00</span>
<span class="t" style="top:719.59px;font-size:12.3px;color:#6f747e;letter-spacing:1.185px;left:1547.66px;">11:00</span>
<span class="t" style="top:719.59px;font-size:12.3px;color:#6f747e;letter-spacing:0.955px;left:1651.07px;">12:00</span>
<span class="t" style="top:719.59px;font-size:12.3px;color:#6f747e;letter-spacing:0.955px;left:1754.47px;">13:00</span>
<span class="t" style="top:719.59px;font-size:12.3px;color:#6f747e;letter-spacing:0.955px;left:1857.88px;">14:00</span>
<span class="t" style="top:719.59px;font-size:12.3px;color:#6f747e;letter-spacing:0.955px;left:1961.28px;">15:00</span>
<span class="t" style="top:719.59px;font-size:12.3px;color:#6f747e;letter-spacing:0.955px;left:2064.69px;">16:00</span>
<span class="t" style="top:719.59px;font-size:12.3px;color:#6f747e;letter-spacing:0.955px;left:2168.10px;">17:00</span>
<span class="t" style="top:719.59px;font-size:12.3px;color:#6f747e;letter-spacing:0.955px;left:2271.50px;">18:00</span>
<span class="t" style="top:719.59px;font-size:12.3px;color:#6f747e;letter-spacing:0.955px;left:2374.91px;">19:00</span>
<span class="t" style="top:719.59px;font-size:12.3px;color:#6f747e;letter-spacing:0.955px;left:2478.31px;">20:00</span>
<span class="t" style="top:719.59px;font-size:12.3px;color:#6f747e;letter-spacing:0.955px;left:2581.72px;">21:00</span>
<span class="t" style="top:719.59px;font-size:12.3px;color:#6f747e;letter-spacing:0.955px;left:2685.12px;">22:00</span>
<span class="t" style="top:719.59px;font-size:12.3px;color:#6f747e;letter-spacing:0.955px;left:2788.53px;">23:00</span>
<span class="t" style="top:731.79px;font-size:12.3px;color:#6f747e;letter-spacing:0.462px;left:410.20px;">September 16, 2024</span>
<span class="t" style="top:766.43px;font-size:15.2px;color:#343741;letter-spacing:0.377px;-webkit-text-stroke:0.25px #343741;left:411.20px;">Columns</span>
<span class="t" style="top:766.49px;font-size:15.6px;color:#343741;-webkit-text-stroke:0.2px #343741;left:493.90px;transform:translateX(-50%);">9</span>
<span class="t" style="top:766.43px;font-size:15.2px;color:#343741;letter-spacing:0.547px;-webkit-text-stroke:0.25px #343741;left:551.60px;">Sort fields</span>
<span class="t" style="top:766.49px;font-size:15.6px;color:#343741;-webkit-text-stroke:0.2px #343741;left:645.10px;transform:translateX(-50%);">1</span>
<span class="t" style="top:766.03px;font-size:15.2px;color:#343741;font-weight:700;letter-spacing:0.170px;left:667.90px;">27 alerts</span>
<span class="t" style="top:766.43px;font-size:15.2px;color:#343741;letter-spacing:0.097px;-webkit-text-stroke:0.25px #343741;left:795.30px;">Fields</span>
<span class="t" style="top:765.83px;font-size:15.2px;color:#69707d;letter-spacing:0.429px;left:2598.70px;">Updated 20 seconds ago</span>
<span class="t" style="top:804.93px;font-size:15.2px;color:#343741;font-weight:700;letter-spacing:-0.067px;left:421.60px;">Actions</span>
<span class="t" style="top:804.93px;font-size:15.2px;color:#343741;font-weight:700;letter-spacing:0.168px;left:515.20px;">Alert Status</span>
<span class="t" style="top:804.93px;font-size:15.2px;color:#343741;font-weight:700;letter-spacing:0.098px;left:665.40px;">Triggered</span>
<span class="t" style="top:804.93px;font-size:15.2px;color:#343741;font-weight:700;letter-spacing:0.038px;left:906.60px;">Duration</span>
<span class="t" style="top:804.93px;font-size:15.2px;color:#343741;font-weight:700;letter-spacing:-0.077px;left:989.80px;">Rule name</span>
<span class="t" style="top:804.93px;font-size:15.2px;color:#343741;font-weight:700;letter-spacing:-0.266px;left:1177.50px;">Group</span>
<span class="t" style="top:804.93px;font-size:15.2px;color:#343741;font-weight:700;letter-spacing:0.004px;left:1302.50px;">Observed va...</span>
<span class="t" style="top:804.93px;font-size:15.2px;color:#343741;font-weight:700;letter-spacing:0.072px;left:1457.70px;">Threshold</span>
<span class="t" style="top:804.93px;font-size:15.2px;color:#343741;font-weight:700;letter-spacing:0.124px;left:1552.80px;">Tags</span>
<span class="t" style="top:804.93px;font-size:15.2px;color:#343741;font-weight:700;letter-spacing:-0.215px;left:1740.00px;">Reason</span>
<span class="t" style="top:842.63px;font-size:15.2px;color:#000;letter-spacing:0.206px;-webkit-text-stroke:0.3px #000;left:526.40px;">Recovered</span>
<span class="t" style="top:840.33px;font-size:15.2px;color:#4d525d;letter-spacing:0.652px;left:665.20px;width:229.20px;overflow:hidden;">Sep 16, 2024, 21:22:46.554 (UTC+00:00)</span>
<span class="t" style="top:840.33px;font-size:15.2px;color:#4d525d;letter-spacing:0.686px;left:933.40px;">315 s</span>
<span class="t" style="top:840.33px;font-size:15.2px;color:#4d525d;letter-spacing:0.118px;left:989.80px;">MyDFIR-SSH Brute Force</span>
<span class="t" style="top:840.33px;font-size:15.2px;color:#4d525d;letter-spacing:0.494px;left:1177.50px;">query matched</span>
<span class="t" style="top:840.33px;font-size:15.2px;color:#4d525d;left:1302.50px;transform:scaleX(1.0647);transform-origin:0 50%;">0</span>
<span class="t" style="top:840.33px;font-size:15.2px;color:#4d525d;letter-spacing:0.694px;left:1518.20px;">10</span>
<span class="t" style="top:840.33px;font-size:15.2px;color:#4d525d;left:1552.80px;transform:scaleX(1.2444);transform-origin:0 50%;">--</span>
<span class="t" style="top:840.33px;font-size:15.2px;color:#0071c2;letter-spacing:0.476px;left:1740.00px;">Document count is 0 in the last 5m in logs-* data view. Alert when greater than 10.</span>
<span class="t" style="top:877.63px;font-size:15.2px;color:#000;letter-spacing:0.206px;-webkit-text-stroke:0.3px #000;left:526.40px;">Recovered</span>
<span class="t" style="top:875.33px;font-size:15.2px;color:#4d525d;letter-spacing:0.652px;left:665.20px;width:229.20px;overflow:hidden;">Sep 16, 2024, 21:02:49.528 (UTC+00:00)</span>
<span class="t" style="top:875.33px;font-size:15.2px;color:#4d525d;letter-spacing:0.686px;left:933.40px;">252 s</span>
<span class="t" style="top:875.33px;font-size:15.2px;color:#4d525d;letter-spacing:0.118px;left:989.80px;">MyDFIR-SSH Brute Force</span>
<span class="t" style="top:875.33px;font-size:15.2px;color:#4d525d;letter-spacing:0.494px;left:1177.50px;">query matched</span>
<span class="t" style="top:875.33px;font-size:15.2px;color:#4d525d;left:1302.50px;transform:scaleX(1.0647);transform-origin:0 50%;">0</span>
<span class="t" style="top:875.33px;font-size:15.2px;color:#4d525d;letter-spacing:0.694px;left:1518.20px;">10</span>
<span class="t" style="top:875.33px;font-size:15.2px;color:#4d525d;left:1552.80px;transform:scaleX(1.2444);transform-origin:0 50%;">--</span>
<span class="t" style="top:875.33px;font-size:15.2px;color:#0071c2;letter-spacing:0.476px;left:1740.00px;">Document count is 0 in the last 5m in logs-* data view. Alert when greater than 10.</span>
<span class="t" style="top:912.63px;font-size:15.2px;color:#fff;font-weight:700;letter-spacing:-0.199px;left:526.40px;">Active</span>
<span class="t" style="top:910.33px;font-size:15.2px;color:#4d525d;letter-spacing:0.652px;left:665.20px;width:229.20px;overflow:hidden;">Sep 16, 2024, 20:10:52.305 (UTC+00:00)</span>
<span class="t" style="top:910.33px;font-size:15.2px;color:#4d525d;letter-spacing:0.492px;left:916.30px;">156 min</span>
<span class="t" style="top:910.33px;font-size:15.2px;color:#4d525d;letter-spacing:0.091px;left:989.80px;">MyDFIR-RDP Brute Force</span>
<span class="t" style="top:910.33px;font-size:15.2px;color:#4d525d;letter-spacing:0.494px;left:1177.50px;">query matched</span>
<span class="t" style="top:910.33px;font-size:15.2px;color:#4d525d;left:1302.50px;transform:scaleX(1.1285);transform-origin:0 50%;">390</span>
<span class="t" style="top:910.33px;font-size:15.2px;color:#4d525d;left:1527.80px;">5</span>
<span class="t" style="top:910.33px;font-size:15.2px;color:#4d525d;left:1552.80px;transform:scaleX(1.2444);transform-origin:0 50%;">--</span>
<span class="t" style="top:910.33px;font-size:15.2px;color:#0071c2;letter-spacing:0.505px;left:1740.00px;">Document count is 390 in the last 5m in logs-* data view. Alert when greater than 5.</span>
<span class="t" style="top:947.63px;font-size:15.2px;color:#000;letter-spacing:0.206px;-webkit-text-stroke:0.3px #000;left:526.40px;">Recovered</span>
<span class="t" style="top:945.33px;font-size:15.2px;color:#4d525d;letter-spacing:0.652px;left:665.20px;width:229.20px;overflow:hidden;">Sep 16, 2024, 20:09:22.308 (UTC+00:00)</span>
<span class="t" style="top:945.33px;font-size:15.2px;color:#4d525d;letter-spacing:0.381px;left:925.80px;">27 min</span>
<span class="t" style="top:945.33px;font-size:15.2px;color:#4d525d;letter-spacing:0.118px;left:989.80px;">MyDFIR-SSH Brute Force</span>
<span class="t" style="top:945.33px;font-size:15.2px;color:#4d525d;letter-spacing:0.494px;left:1177.50px;">query matched</span>
<span class="t" style="top:945.33px;font-size:15.2px;color:#4d525d;left:1302.50px;transform:scaleX(1.0647);transform-origin:0 50%;">0</span>
<span class="t" style="top:945.33px;font-size:15.2px;color:#4d525d;letter-spacing:0.694px;left:1518.20px;">10</span>
<span class="t" style="top:945.33px;font-size:15.2px;color:#4d525d;left:1552.80px;transform:scaleX(1.2444);transform-origin:0 50%;">--</span>
<span class="t" style="top:945.33px;font-size:15.2px;color:#0071c2;letter-spacing:0.476px;left:1740.00px;">Document count is 0 in the last 5m in logs-* data view. Alert when greater than 10.</span>
<span class="t" style="top:982.63px;font-size:15.2px;color:#000;letter-spacing:0.206px;-webkit-text-stroke:0.3px #000;left:526.40px;">Recovered</span>
<span class="t" style="top:980.33px;font-size:15.2px;color:#4d525d;letter-spacing:0.652px;left:665.20px;width:229.20px;overflow:hidden;">Sep 16, 2024, 19:05:19.238 (UTC+00:00)</span>
<span class="t" style="top:980.33px;font-size:15.2px;color:#4d525d;letter-spacing:0.686px;left:933.40px;">378 s</span>
<span class="t" style="top:980.33px;font-size:15.2px;color:#4d525d;letter-spacing:0.118px;left:989.80px;">MyDFIR-SSH Brute Force</span>
<span class="t" style="top:980.33px;font-size:15.2px;color:#4d525d;letter-spacing:0.494px;left:1177.50px;">query matched</span>
<span class="t" style="top:980.33px;font-size:15.2px;color:#4d525d;left:1302.50px;transform:scaleX(1.0647);transform-origin:0 50%;">0</span>
<span class="t" style="top:980.33px;font-size:15.2px;color:#4d525d;letter-spacing:0.694px;left:1518.20px;">10</span>
<span class="t" style="top:980.33px;font-size:15.2px;color:#4d525d;left:1552.80px;transform:scaleX(1.2444);transform-origin:0 50%;">--</span>
<span class="t" style="top:980.33px;font-size:15.2px;color:#0071c2;letter-spacing:0.476px;left:1740.00px;">Document count is 0 in the last 5m in logs-* data view. Alert when greater than 10.</span>
<span class="t" style="top:1017.63px;font-size:15.2px;color:#000;letter-spacing:0.206px;-webkit-text-stroke:0.3px #000;left:526.40px;">Recovered</span>
<span class="t" style="top:1015.33px;font-size:15.2px;color:#4d525d;letter-spacing:0.652px;left:665.20px;width:229.20px;overflow:hidden;">Sep 16, 2024, 18:22:16.187 (UTC+00:00)</span>
<span class="t" style="top:1015.33px;font-size:15.2px;color:#4d525d;letter-spacing:0.686px;left:933.40px;">189 s</span>
<span class="t" style="top:1015.33px;font-size:15.2px;color:#4d525d;letter-spacing:0.118px;left:989.80px;">MyDFIR-SSH Brute Force</span>
<span class="t" style="top:1015.33px;font-size:15.2px;color:#4d525d;letter-spacing:0.494px;left:1177.50px;">query matched</span>
<span class="t" style="top:1015.33px;font-size:15.2px;color:#4d525d;left:1302.50px;transform:scaleX(1.0647);transform-origin:0 50%;">0</span>
<span class="t" style="top:1015.33px;font-size:15.2px;color:#4d525d;letter-spacing:0.694px;left:1518.20px;">10</span>
<span class="t" style="top:1015.33px;font-size:15.2px;color:#4d525d;left:1552.80px;transform:scaleX(1.2444);transform-origin:0 50%;">--</span>
<span class="t" style="top:1015.33px;font-size:15.2px;color:#0071c2;letter-spacing:0.476px;left:1740.00px;">Document count is 0 in the last 5m in logs-* data view. Alert when greater than 10.</span>
<span class="t" style="top:1052.63px;font-size:15.2px;color:#000;letter-spacing:0.206px;-webkit-text-stroke:0.3px #000;left:526.40px;">Recovered</span>
<span class="t" style="top:1050.33px;font-size:15.2px;color:#4d525d;letter-spacing:0.652px;left:665.20px;width:229.20px;overflow:hidden;">Sep 16, 2024, 17:57:04.163 (UTC+00:00)</span>
<span class="t" style="top:1050.33px;font-size:15.2px;color:#4d525d;letter-spacing:0.381px;left:925.80px;">13 min</span>
<span class="t" style="top:1050.33px;font-size:15.2px;color:#4d525d;letter-spacing:0.118px;left:989.80px;">MyDFIR-SSH Brute Force</span>
<span class="t" style="top:1050.33px;font-size:15.2px;color:#4d525d;letter-spacing:0.494px;left:1177.50px;">query matched</span>
<span class="t" style="top:1050.33px;font-size:15.2px;color:#4d525d;left:1302.50px;transform:scaleX(1.0647);transform-origin:0 50%;">0</span>
<span class="t" style="top:1050.33px;font-size:15.2px;color:#4d525d;letter-spacing:0.694px;left:1518.20px;">10</span>
<span class="t" style="top:1050.33px;font-size:15.2px;color:#4d525d;left:1552.80px;transform:scaleX(1.2444);transform-origin:0 50%;">--</span>
<span class="t" style="top:1050.33px;font-size:15.2px;color:#0071c2;letter-spacing:0.476px;left:1740.00px;">Document count is 0 in the last 5m in logs-* data view. Alert when greater than 10.</span>
<span class="t" style="top:1087.63px;font-size:15.2px;color:#000;letter-spacing:0.206px;-webkit-text-stroke:0.3px #000;left:526.40px;">Recovered</span>
<span class="t" style="top:1085.33px;font-size:15.2px;color:#4d525d;letter-spacing:0.652px;left:665.20px;width:229.20px;overflow:hidden;">Sep 16, 2024, 16:30:58.007 (UTC+00:00)</span>
<span class="t" style="top:1085.33px;font-size:15.2px;color:#4d525d;letter-spacing:0.381px;left:925.80px;">27 min</span>
<span class="t" style="top:1085.33px;font-size:15.2px;color:#4d525d;letter-spacing:0.118px;left:989.80px;">MyDFIR-SSH Brute Force</span>
<span class="t" style="top:1085.33px;font-size:15.2px;color:#4d525d;letter-spacing:0.494px;left:1177.50px;">query matched</span>
<span class="t" style="top:1085.33px;font-size:15.2px;color:#4d525d;left:1302.50px;transform:scaleX(1.0647);transform-origin:0 50%;">0</span>
<span class="t" style="top:1085.33px;font-size:15.2px;color:#4d525d;letter-spacing:0.694px;left:1518.20px;">10</span>
<span class="t" style="top:1085.33px;font-size:15.2px;color:#4d525d;left:1552.80px;transform:scaleX(1.2444);transform-origin:0 50%;">--</span>
<span class="t" style="top:1085.33px;font-size:15.2px;color:#0071c2;letter-spacing:0.476px;left:1740.00px;">Document count is 0 in the last 5m in logs-* data view. Alert when greater than 10.</span>
<span class="t" style="top:1122.63px;font-size:15.2px;color:#000;letter-spacing:0.206px;-webkit-text-stroke:0.3px #000;left:526.40px;">Recovered</span>
<span class="t" style="top:1120.33px;font-size:15.2px;color:#4d525d;letter-spacing:0.652px;left:665.20px;width:229.20px;overflow:hidden;">Sep 16, 2024, 15:39:30.929 (UTC+00:00)</span>
<span class="t" style="top:1120.33px;font-size:15.2px;color:#4d525d;letter-spacing:0.686px;left:933.40px;">252 s</span>
<span class="t" style="top:1120.33px;font-size:15.2px;color:#4d525d;letter-spacing:0.118px;left:989.80px;">MyDFIR-SSH Brute Force</span>
<span class="t" style="top:1120.33px;font-size:15.2px;color:#4d525d;letter-spacing:0.494px;left:1177.50px;">query matched</span>
<span class="t" style="top:1120.33px;font-size:15.2px;color:#4d525d;left:1302.50px;transform:scaleX(1.0647);transform-origin:0 50%;">0</span>
<span class="t" style="top:1120.33px;font-size:15.2px;color:#4d525d;letter-spacing:0.694px;left:1518.20px;">10</span>
<span class="t" style="top:1120.33px;font-size:15.2px;color:#4d525d;left:1552.80px;transform:scaleX(1.2444);transform-origin:0 50%;">--</span>
<span class="t" style="top:1120.33px;font-size:15.2px;color:#0071c2;letter-spacing:0.476px;left:1740.00px;">Document count is 0 in the last 5m in logs-* data view. Alert when greater than 10.</span>
<span class="t" style="top:1157.63px;font-size:15.2px;color:#000;letter-spacing:0.206px;-webkit-text-stroke:0.3px #000;left:526.40px;">Recovered</span>
<span class="t" style="top:1155.33px;font-size:15.2px;color:#4d525d;letter-spacing:0.652px;left:665.20px;width:229.20px;overflow:hidden;">Sep 16, 2024, 14:09:12.845 (UTC+00:00)</span>
<span class="t" style="top:1155.33px;font-size:15.2px;color:#4d525d;letter-spacing:0.381px;left:925.80px;">23 min</span>
<span class="t" style="top:1155.33px;font-size:15.2px;color:#4d525d;letter-spacing:0.118px;left:989.80px;">MyDFIR-SSH Brute Force</span>
<span class="t" style="top:1155.33px;font-size:15.2px;color:#4d525d;letter-spacing:0.494px;left:1177.50px;">query matched</span>
<span class="t" style="top:1155.33px;font-size:15.2px;color:#4d525d;left:1302.50px;transform:scaleX(1.0647);transform-origin:0 50%;">0</span>
<span class="t" style="top:1155.33px;font-size:15.2px;color:#4d525d;letter-spacing:0.694px;left:1518.20px;">10</span>
<span class="t" style="top:1155.33px;font-size:15.2px;color:#4d525d;left:1552.80px;transform:scaleX(1.2444);transform-origin:0 50%;">--</span>
<span class="t" style="top:1155.33px;font-size:15.2px;color:#0071c2;letter-spacing:0.476px;left:1740.00px;">Document count is 0 in the last 5m in logs-* data view. Alert when greater than 10.</span>
<span class="t" style="top:1198.03px;font-size:15.2px;color:#343741;letter-spacing:0.194px;-webkit-text-stroke:0.25px #343741;left:386.20px;">Rows per page: 10</span>
<span class="t" style="top:1197.76px;font-size:17.3px;color:#0071c2;font-weight:700;left:2795.80px;transform:translateX(-50%);">1</span>
<span class="t" style="top:1197.76px;font-size:17.3px;color:#343741;left:2825.40px;transform:translateX(-50%);">2</span>
<span class="t" style="top:1197.76px;font-size:17.3px;color:#343741;left:2856.60px;transform:translateX(-50%);">3</span>
<span class="t" style="top:1302.12px;font-size:19.7px;color:#1a1c21;font-weight:700;letter-spacing:0.043px;left:390.70px;">Log Events</span>
<span class="t" style="top:1303.73px;font-size:15.2px;color:#343741;letter-spacing:0.405px;-webkit-text-stroke:0.15px #343741;left:2793.70px;">Show log stream</span>
<span class="t" style="top:1361.75px;font-size:17.9px;color:#1a1c21;font-weight:700;letter-spacing:-0.050px;-webkit-text-stroke:0.15px #1a1c21;left:376.00px;">Logs rate per minute</span>
<span class="t" style="top:1396.22px;font-size:17.7px;color:#343741;letter-spacing:0.633px;left:376.00px;">winlog.winlog</span>
<span class="t" style="top:1419.24px;font-size:27.0px;color:#54b399;font-weight:700;left:376.00px;transform:scaleX(1.1648);transform-origin:0 50%;">65</span>
<span class="t" style="top:1396.22px;font-size:17.7px;color:#343741;letter-spacing:0.580px;left:518.80px;">system.security</span>
<span class="t" style="top:1419.24px;font-size:27.0px;color:#6092c0;font-weight:700;left:518.80px;transform:scaleX(1.1848);transform-origin:0 50%;">34</span>
<span class="t" style="top:1396.22px;font-size:17.7px;color:#343741;letter-spacing:0.481px;left:679.20px;">elastic_agent.metricbeat</span>
<span class="t" style="top:1419.24px;font-size:27.0px;color:#d36086;font-weight:700;left:679.20px;transform:scaleX(1.1316);transform-origin:0 50%;">24</span>
<span class="t" style="top:1396.22px;font-size:17.7px;color:#343741;letter-spacing:0.554px;left:912.80px;">system.auth</span>
<span class="t" style="top:1419.24px;font-size:27.0px;color:#9170b8;font-weight:700;left:912.80px;transform:scaleX(1.0118);transform-origin:0 50%;">19</span>
<span class="t" style="top:1561.69px;font-size:12.3px;color:#6f747e;letter-spacing:0.955px;left:442.83px;transform:translateX(-50%);">00:00</span>
<span class="t" style="top:1561.69px;font-size:12.3px;color:#6f747e;letter-spacing:0.955px;left:719.22px;transform:translateX(-50%);">03:00</span>
<span class="t" style="top:1561.69px;font-size:12.3px;color:#6f747e;letter-spacing:0.955px;left:995.61px;transform:translateX(-50%);">06:00</span>
<span class="t" style="top:1561.69px;font-size:12.3px;color:#6f747e;letter-spacing:0.955px;left:1272.00px;transform:translateX(-50%);">09:00</span>
<span class="t" style="top:1561.69px;font-size:12.3px;color:#6f747e;letter-spacing:0.955px;left:1548.39px;transform:translateX(-50%);">12:00</span>
<span class="t" style="top:1561.69px;font-size:12.3px;color:#6f747e;letter-spacing:0.955px;left:1824.78px;transform:translateX(-50%);">15:00</span>
<span class="t" style="top:1561.69px;font-size:12.3px;color:#6f747e;letter-spacing:0.955px;left:2101.17px;transform:translateX(-50%);">18:00</span>
<span class="t" style="top:1561.69px;font-size:12.3px;color:#6f747e;letter-spacing:0.955px;left:2377.56px;transform:translateX(-50%);">21:00</span>
<span class="t" style="top:1507.75px;font-size:12.7px;color:#6f747e;letter-spacing:0.450px;left:422.75px;transform:translateX(-100%);">200</span>
<span class="t" style="top:1525.45px;font-size:12.7px;color:#6f747e;letter-spacing:0.450px;left:422.75px;transform:translateX(-100%);">100</span>
<span class="t" style="top:1543.15px;font-size:12.7px;color:#6f747e;letter-spacing:0.450px;left:422.75px;transform:translateX(-100%);">0</span>
<span class="t" style="top:1498.63px;font-size:15.2px;color:#4d525d;letter-spacing:0.438px;left:2721.20px;">winlog.winlog</span>
<span class="t" style="top:1526.43px;font-size:15.2px;color:#4d525d;letter-spacing:0.425px;left:2721.20px;">system.security</span>
<span class="t" style="top:1553.43px;font-size:15.2px;color:#4d525d;letter-spacing:0.262px;left:2721.20px;">elastic_agent.metric...</span>
<span class="t" style="top:1581.23px;font-size:15.2px;color:#4d525d;letter-spacing:0.411px;left:2721.20px;">system.auth</span>
<span class="t" style="top:1674.92px;font-size:19.7px;color:#1a1c21;font-weight:700;letter-spacing:0.424px;left:390.30px;">Hosts</span>
<span class="t" style="top:1676.03px;font-size:15.2px;color:#343741;letter-spacing:0.489px;-webkit-text-stroke:0.15px #343741;left:2802.00px;">Show inventory</span>
<span class="t" style="top:1740.73px;font-size:15.2px;color:#1a1c21;font-weight:700;letter-spacing:0.023px;left:386.20px;">Uptime</span>
<span class="t" style="top:1740.73px;font-size:15.2px;color:#1a1c21;font-weight:700;letter-spacing:-0.005px;left:486.60px;">Hostname</span>
<span class="t" style="top:1740.73px;font-size:15.2px;color:#1a1c21;font-weight:700;letter-spacing:-0.824px;left:971.80px;">CPU %</span>
<span class="t" style="top:1740.73px;font-size:15.2px;color:#1a1c21;font-weight:700;letter-spacing:-0.368px;left:1456.80px;">Load 15</span>
<span class="t" style="top:1740.73px;font-size:15.2px;color:#1a1c21;font-weight:700;letter-spacing:-1.909px;left:1942.00px;">RX</span>
<span class="t" style="top:1740.73px;font-size:15.2px;color:#1a1c21;font-weight:700;letter-spacing:-0.822px;left:2427.80px;">TX</span>
</body></html>
